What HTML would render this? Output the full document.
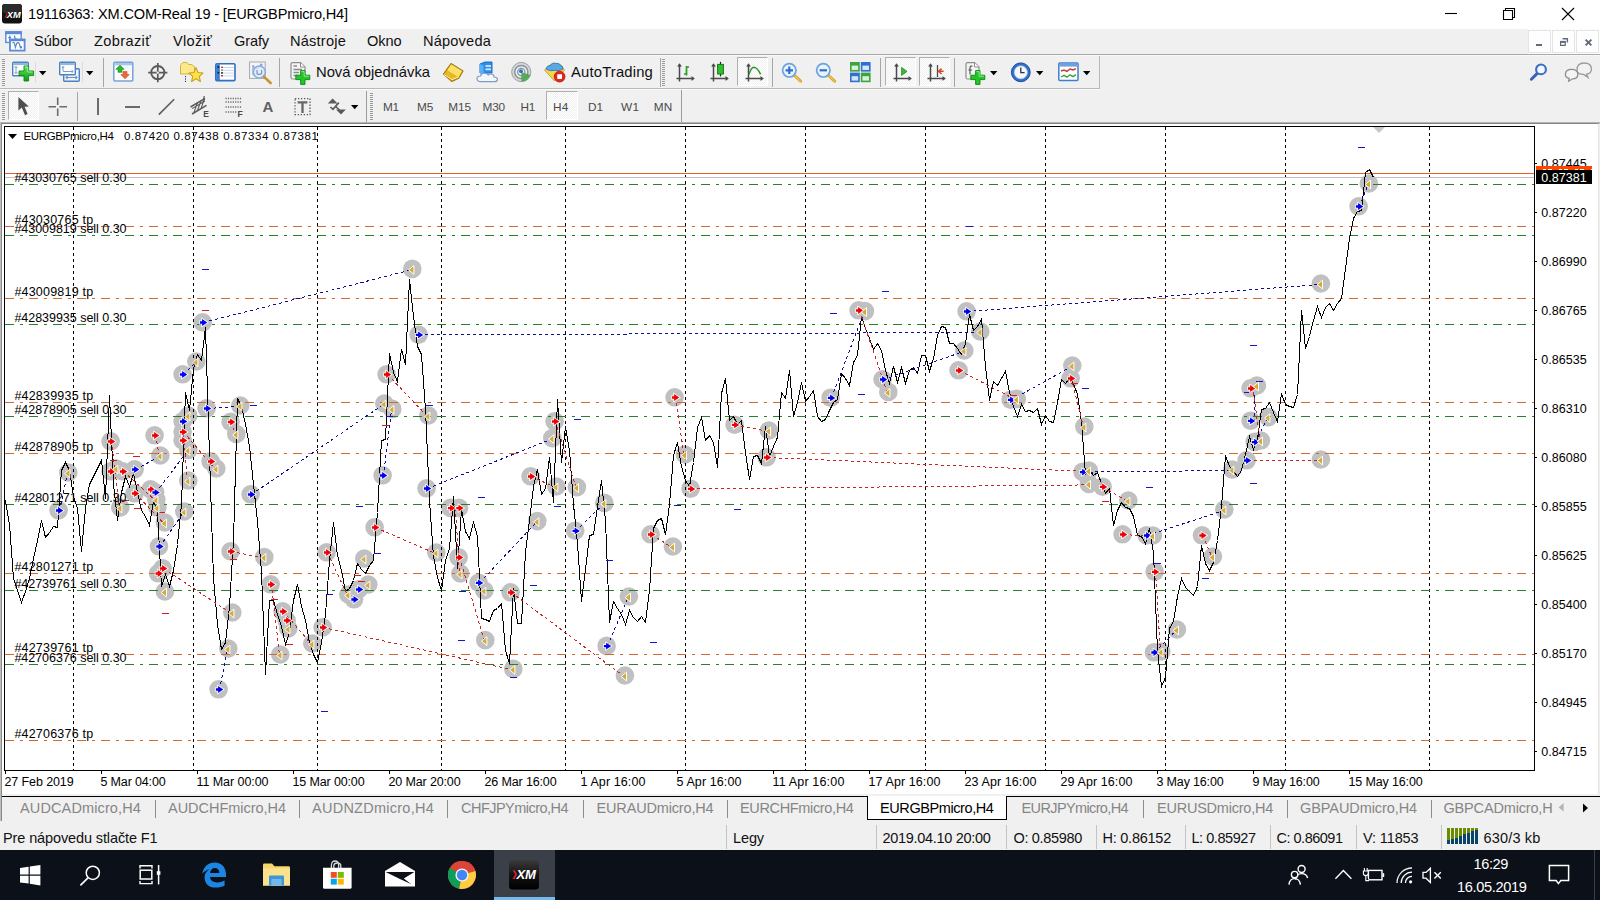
<!DOCTYPE html><html><head><meta charset="utf-8"><title>MT4</title><style>
*{box-sizing:border-box;margin:0;padding:0}
html,body{width:1600px;height:900px;overflow:hidden;background:#f0f0f0;font-family:"Liberation Sans",sans-serif;}
.abs{position:absolute}
.t{position:absolute;white-space:pre;line-height:1;color:#000}
#title{left:0;top:0;width:1600px;height:29px;background:#fff}
#menu{left:0;top:29px;width:1600px;height:25px;background:#f0f0f0}
.mi{font-size:15px;top:34px;color:#111}
.tf{font-size:12px;color:#333;top:101px;letter-spacing:-0.3px}
.cl{font-size:12.5px;color:#000}
.pl{font-size:12.5px;color:#000;left:1541px}
.tl{font-size:12.5px;color:#000;top:775px}
.tab{font-size:14.7px;color:#868686;top:801px}
.st{font-size:14.5px;color:#111;top:831px}
.ssep{position:absolute;top:825px;width:1px;height:24px;background:#c4c4c4}
</style></head><body>
<div class="abs" id="title"></div>
<div class="t" style="left:28px;top:7px;font-size:14.6px;color:#000;letter-spacing:-0.194px;">19116363: XM.COM-Real 19 - [EURGBPmicro,H4]</div>
<svg class="abs" style="left:2px;top:4px" width="21" height="20" viewBox="0 0 21 20"><rect x="0" y="0" width="20" height="19.5" rx="3" fill="#111"/><rect x="0" y="0" width="20" height="9" rx="3" fill="#2b2b2b"/><path d="M2.6 6.6 L4.6 10 L2.4 13.6 L3.8 13.6 L5.8 10.4 Z" fill="#e11"/><text x="4.8" y="13.6" font-family="Liberation Sans" font-weight="bold" font-style="italic" font-size="9.6" fill="#fff" textLength="14" lengthAdjust="spacingAndGlyphs">XM</text></svg>
<svg class="abs" style="left:1430px;top:0" width="170" height="29" viewBox="0 0 170 29" fill="none" stroke="#000" stroke-width="1.1"><path d="M15 13.5 H27"/><path d="M73.5 10.5 H82.5 V19.5 H73.5 Z M75.5 10.5 V8.5 H84.5 V17.5 H82.5"/><path d="M132 8 L144 20 M144 8 L132 20"/></svg>
<div class="abs" id="menu"></div>
<div class="t" style="left:34px;top:34px;font-size:14.6px;color:#111;letter-spacing:0.008px;">Súbor</div>
<div class="t" style="left:94px;top:34px;font-size:14.6px;color:#111;letter-spacing:0.355px;">Zobraziť</div>
<div class="t" style="left:173px;top:34px;font-size:14.6px;color:#111;letter-spacing:0.313px;">Vložiť</div>
<div class="t" style="left:234px;top:34px;font-size:14.6px;color:#111;letter-spacing:-0.139px;">Grafy</div>
<div class="t" style="left:290px;top:34px;font-size:14.6px;color:#111;letter-spacing:0.204px;">Nástroje</div>
<div class="t" style="left:367px;top:34px;font-size:14.6px;color:#111;letter-spacing:-0.099px;">Okno</div>
<div class="t" style="left:423px;top:34px;font-size:14.6px;color:#111;letter-spacing:0.180px;">Nápoveda</div>
<svg class="abs" style="left:4px;top:30px" width="22" height="22" viewBox="0 0 22 22"><rect x="1.8" y="2" width="15.4" height="10.4" fill="#fdfeff" stroke="#5a8ad6" stroke-width="1.4"/><rect x="1.2" y="1.2" width="16.6" height="3" fill="#5a8ad6"/><path d="M4.2 7.6 H7 M5.8 5.4 V9 M10.6 5.6 V7.6 L12.4 9" stroke="#5f86cc" stroke-width="1.2" fill="none"/><rect x="6" y="9.6" width="14.6" height="11" fill="#fdfeff" stroke="#5a8ad6" stroke-width="1.8"/><rect x="5.2" y="8.8" width="16.2" height="2.4" fill="#5a8ad6"/><path d="M8.4 12.6 Q10.2 11.8 10.6 14 L11.4 17.4 L12.6 13.6 Q14 11.6 15.2 13.6 L16.2 16.8" stroke="#5f86cc" stroke-width="1.2" fill="none"/><rect x="15.8" y="16.2" width="2.2" height="2.2" fill="#4f7fd6"/></svg>
<div class="abs" style="left:0;top:54px;width:1600px;height:1px;background:#a9a9a9"></div>
<div class="abs" style="left:0;top:55px;width:1600px;height:1px;background:#f9f9f9"></div>
<div class="abs" style="left:1528px;top:29px;width:72px;height:25px;background:#fdfdfd"></div>
<div class="abs" style="left:1528px;top:30px;width:23px;height:23px;background:#fefefe;border:1px solid #e4e4e6"></div>
<div class="abs" style="left:1552px;top:30px;width:23px;height:23px;background:#fefefe;border:1px solid #e4e4e6"></div>
<div class="abs" style="left:1576px;top:30px;width:23px;height:23px;background:#fefefe;border:1px solid #e4e4e6"></div>
<svg class="abs" style="left:1528px;top:30px" width="72" height="23" viewBox="0 0 72 23" fill="none" stroke="#626a77"><path d="M8 15 H14" stroke-width="2"/><path d="M32.6 12.2 H37.2 V15.4 H32.6 Z" stroke-width="1.2"/><path d="M32 11.8 H37.8" stroke-width="1.8"/><path d="M34.6 8.8 H40 M39.4 8.6 V12.4" stroke-width="1.4"/><path d="M57.6 9.6 L63.4 15.4 M63.4 9.6 L57.6 15.4" stroke-width="1.9"/></svg>
<div class="abs" style="left:0;top:89px;width:1100px;height:1px;background:#fbfbfb"></div>
<svg class="abs" style="left:2px;top:59px" width="3" height="27" viewBox="0 0 3 27" shape-rendering="crispEdges"><rect x="0" y="0" width="3" height="1" fill="#9a9a9a"/><rect x="0" y="2" width="3" height="1" fill="#9a9a9a"/><rect x="0" y="4" width="3" height="1" fill="#9a9a9a"/><rect x="0" y="6" width="3" height="1" fill="#9a9a9a"/><rect x="0" y="8" width="3" height="1" fill="#9a9a9a"/><rect x="0" y="10" width="3" height="1" fill="#9a9a9a"/><rect x="0" y="12" width="3" height="1" fill="#9a9a9a"/><rect x="0" y="14" width="3" height="1" fill="#9a9a9a"/><rect x="0" y="16" width="3" height="1" fill="#9a9a9a"/><rect x="0" y="18" width="3" height="1" fill="#9a9a9a"/><rect x="0" y="20" width="3" height="1" fill="#9a9a9a"/><rect x="0" y="22" width="3" height="1" fill="#9a9a9a"/><rect x="0" y="24" width="3" height="1" fill="#9a9a9a"/><rect x="0" y="26" width="3" height="1" fill="#9a9a9a"/></svg>
<div class="abs" style="left:1099px;top:56px;width:1px;height:33px;background:#b9b9b9"></div>
<div class="abs" style="left:0px;top:88px;width:1100px;height:1px;background:#b9b9b9"></div>
<svg class="abs" style="left:12px;top:61px" width="23" height="22" viewBox="0 0 23 22" ><defs><linearGradient id="gp" x1="0" y1="0" x2="0" y2="1"><stop offset="0" stop-color="#5fe85f"/><stop offset="1" stop-color="#0f9a15"/></linearGradient></defs>
<rect x="0.7" y="1.2" width="15.6" height="13.6" rx="1" fill="#fdfdfe" stroke="#4b82bf" stroke-width="1.4"/>
<rect x="1.4" y="1.9" width="14.2" height="2.2" fill="#8fb6e0"/>
<path d="M4 5.5 V12.5 M2.6 7 L4 5.3 L5.4 7 M2.6 11 L4 12.7 L5.4 11" stroke="#8fa3b8" stroke-width="1" fill="none"/>
<path d="M12 5 h4.6 v5 h5 v4.6 h-5 v5.4 h-4.6 v-5.4 h-5 v-4.6 h5 z" fill="url(#gp)" stroke="#0b8a12" stroke-width="0.9"/>
<path d="M12.8 6 h3 v5 h4.8" stroke="#b9ffb9" stroke-width="0.9" fill="none" opacity="0.8"/></svg>
<div class="abs" style="left:35px;top:62px;width:1px;height:21px;background:#dcdcdc"></div>
<svg class="abs" style="left:39px;top:71px" width="8" height="5" viewBox="0 0 8 5" ><path d="M0 0 H7.4 L3.7 4.2 Z" fill="#000"/></svg>
<svg class="abs" style="left:59px;top:61px" width="22" height="22" viewBox="0 0 22 22" ><rect x="4.7" y="7.7" width="15.6" height="12.6" rx="1" fill="#eef4fb" stroke="#4b82bf" stroke-width="1.4"/>
<path d="M7 16.5 H18 M8.5 15 L7 16.5 L8.5 18 M16.5 15 L18 16.5 L16.5 18" stroke="#6f93bd" stroke-width="1.1" fill="none"/>
<rect x="0.7" y="1.2" width="15.6" height="12.6" rx="1" fill="#fdfdfe" stroke="#4b82bf" stroke-width="1.4"/>
<rect x="1.4" y="1.9" width="14.2" height="2.2" fill="#8fb6e0"/>
<path d="M4 5.5 V10 M2.8 7 L4 5.4 L5.2 7 M4 10.5 H14 M12.6 9.2 L14.2 10.5 L12.6 11.8" stroke="#7d9cc0" stroke-width="1" fill="none"/></svg>
<div class="abs" style="left:82px;top:62px;width:1px;height:21px;background:#dcdcdc"></div>
<svg class="abs" style="left:86px;top:71px" width="8" height="5" viewBox="0 0 8 5" ><path d="M0 0 H7.4 L3.7 4.2 Z" fill="#000"/></svg>
<div class="abs" style="left:103px;top:58px;width:1px;height:29px;background:#a6a6a6"></div>
<svg class="abs" style="left:113px;top:61px" width="21" height="22" viewBox="0 0 21 22" ><rect x="0.8" y="1.3" width="19" height="18.6" rx="1" fill="#fbfcfe" stroke="#78a3d6" stroke-width="1.5"/>
<rect x="1.5" y="2" width="17.6" height="2.4" fill="#a9c8ec"/>
<path d="M10 7 H18 M10 10 H18 M10 13 H18 M10 16 H18" stroke="#e4e9f0" stroke-width="0.8"/>
<path d="M7 4.2 L11.2 8.3 H9 V11.3 H5 V8.3 H2.8 Z" fill="#2eb52e" stroke="#178a17" stroke-width="0.6"/>
<path d="M12 17.7 L7.8 13.6 H10 V10.6 H14 V13.6 H16.2 Z" fill="#f0683a" stroke="#c9441a" stroke-width="0.6"/></svg>
<svg class="abs" style="left:147px;top:62px" width="22" height="22" viewBox="0 0 22 22" ><circle cx="10.8" cy="10.6" r="6.6" fill="none" stroke="#5a5a5a" stroke-width="1.9"/>
<path d="M10.8 1 V20.2 M1.2 10.6 H20.4" stroke="#5a5a5a" stroke-width="1.7"/>
<circle cx="10.8" cy="10.6" r="1.2" fill="#f0f0f0"/></svg>
<svg class="abs" style="left:179px;top:61px" width="25" height="22" viewBox="0 0 25 22" ><path d="M1.5 13 V4.5 Q1.5 3.5 2.5 3 L4 1.5 H8 L9.5 3.5 H13 L15.5 6 V13 Z" fill="#fbe88a" stroke="#d2b23a" stroke-width="1"/>
<path d="M6.5 15 V21" stroke="#333" stroke-width="1" stroke-dasharray="1.2 1.2"/>
<path d="M17 6.6 L19.1 11.5 L24 12 L20.3 15.3 L21.4 20.6 L17 17.8 L12.6 20.6 L13.7 15.3 L10 12 L14.9 11.5 Z" fill="#fbe24a" stroke="#c9a21a" stroke-width="1.1" stroke-linejoin="round"/></svg>
<svg class="abs" style="left:215px;top:62px" width="21" height="20" viewBox="0 0 21 20" ><rect x="0.8" y="1.8" width="19.2" height="16.8" rx="1.2" fill="#fff" stroke="#2f71c4" stroke-width="1.6"/>
<rect x="1.2" y="2.2" width="3.6" height="16" fill="#3b7bd0"/>
<path d="M6 5.5 H19 M6 8.3 H19 M6 11.1 H19 M6 13.9 H19" stroke="#c9d6ee" stroke-width="1"/>
<rect x="2.6" y="4.3" width="1.6" height="1.6" fill="#111"/><rect x="2.6" y="9.9" width="1.6" height="1.6" fill="#111"/>
<rect x="6" y="4.6" width="2" height="1.4" fill="#d33"/><rect x="6" y="7.4" width="2" height="1.4" fill="#5a5"/><rect x="6" y="10.2" width="2" height="1.4" fill="#224"/><rect x="6" y="13" width="2" height="1.4" fill="#d33"/></svg>
<svg class="abs" style="left:249px;top:61px" width="24" height="24" viewBox="0 0 24 24" ><rect x="0.6" y="1" width="15.6" height="16.4" fill="#f6f6f6" stroke="#a8a8a8" stroke-width="1"/>
<path d="M4 4 V14 M4 5 L8 8 L12 3.5 M11 3.2 H13 V5" stroke="#6d90c9" stroke-width="1" fill="none"/>
<circle cx="10.3" cy="11" r="6" fill="#dbe9fb" fill-opacity="0.85" stroke="#86aee0" stroke-width="1.6"/>
<path d="M8 9 V12.5 Q10.3 14.5 12.6 12.5 V9" stroke="#7f98b8" stroke-width="1.2" fill="none"/>
<path d="M14.8 15.6 L21.6 22" stroke="#c9952a" stroke-width="2.6" stroke-linecap="round"/></svg>
<div class="abs" style="left:279px;top:58px;width:1px;height:29px;background:#a6a6a6"></div>
<svg class="abs" style="left:290px;top:61px" width="22" height="24" viewBox="0 0 22 24" ><path d="M1 3.2 Q1 1.6 2.6 1.6 H10.5 L15 6 V16.5 Q15 18 13.4 18 H2.6 Q1 18 1 16.5 Z" fill="#f4f4f4" stroke="#8e8e8e" stroke-width="1.2"/>
<path d="M10.5 1.8 V6 H14.8" fill="#fff" stroke="#8e8e8e" stroke-width="1"/>
<path d="M3.5 5 H7 M3.5 8.5 H12 M3.5 11.5 H9 M3.5 14.5 H8" stroke="#8a8a8a" stroke-width="1.4"/>
<path d="M10.6 9.6 h4.4 v4.6 h4.8 v4.4 h-4.8 v4.8 h-4.4 v-4.8 h-4.8 v-4.4 h4.8 z" fill="#25c42b" stroke="#0b8a12" stroke-width="0.9"/>
<path d="M11.4 10.6 h2.8 v4.6 h4.6" stroke="#b0ffb0" stroke-width="0.9" fill="none" opacity="0.8"/></svg>
<div class="t" style="left:316px;top:65px;font-size:14.8px;color:#111;letter-spacing:-0.025px;">Nová objednávka</div>
<svg class="abs" style="left:442px;top:62px" width="23" height="21" viewBox="0 0 23 21" ><path d="M1.5 12 L9 1.6 L21 9 L17 16 L10 19.5 Z" fill="#e9b722" stroke="#a97a10" stroke-width="1.2" stroke-linejoin="round"/>
<path d="M9.2 2.4 L20 9 L16.4 15 L5.4 8.2 Z" fill="#fbe169"/>
<path d="M2 12.5 L10 17.6 L17 14.6" stroke="#fff1a8" stroke-width="1" fill="none"/></svg>
<svg class="abs" style="left:476px;top:61px" width="23" height="22" viewBox="0 0 23 22" ><path d="M4 3 L9 1 H16 V12 H4 Z" fill="#2e8de6" stroke="#1b6fc4" stroke-width="1"/>
<path d="M4 3 L7.5 4.5 V12 H4 Z" fill="#53b3ff"/>
<rect x="9.5" y="4" width="5.5" height="2" fill="#bfe0ff"/><rect x="9.5" y="7.3" width="5.5" height="2" fill="#bfe0ff"/>
<path d="M4 20.6 Q0.8 20.4 1 17.4 Q1.4 14.8 4.6 15 Q5.6 11.6 9.2 12.2 Q11.2 12.4 12.2 14 Q14.6 11.8 17 13.8 Q18.2 14.8 18 16 Q21.6 16 21.4 18.6 Q21.2 20.6 18.6 20.6 Z" fill="#f3f6fb" stroke="#7e9cc6" stroke-width="1.2"/></svg>
<svg class="abs" style="left:510px;top:61px" width="23" height="22" viewBox="0 0 23 22" ><circle cx="11.3" cy="11" r="9.6" fill="#d4d7da" stroke="#9aa0a6" stroke-width="1"/>
<circle cx="11.3" cy="11" r="6.6" fill="#eceeef" stroke="#8c9399" stroke-width="1.5"/>
<circle cx="11.3" cy="11" r="3.6" fill="#f7f7f7" stroke="#8c9399" stroke-width="1.3"/>
<path d="M11.3 11 V20.6 A9.6 9.6 0 0 0 20.4 14 Z" fill="#4ca64c" opacity="0.9"/>
<circle cx="11" cy="10.3" r="2" fill="#2f74d0"/></svg>
<svg class="abs" style="left:543px;top:61px" width="23" height="23" viewBox="0 0 23 23" ><path d="M1.5 9 L8 3 H17 L21.5 9 L11.5 20 Z" fill="#f6d54a" stroke="#caa326" stroke-width="1"/>
<path d="M3 8 Q4 4 7.6 4.8 Q9 1.2 12.6 2.4 Q15.8 1.4 17 4.6 Q20.4 4.6 20 8 Q16 10.4 11.4 9.4 Q6.6 10.6 3 8 Z" fill="#5aa9e6" stroke="#2c7cc4" stroke-width="0.9"/>
<circle cx="16.6" cy="15.6" r="5.4" fill="#e8261c" stroke="#a8140c" stroke-width="0.8"/>
<rect x="14.2" y="13.3" width="4.8" height="4.6" rx="0.6" fill="#fff"/></svg>
<div class="t" style="left:571px;top:65px;font-size:14.8px;color:#111;letter-spacing:0.175px;">AutoTrading</div>
<div class="abs" style="left:660px;top:58px;width:1px;height:29px;background:#a6a6a6"></div>
<svg class="abs" style="left:662px;top:59px" width="3" height="27" viewBox="0 0 3 27" shape-rendering="crispEdges"><rect x="0" y="0" width="3" height="1" fill="#9a9a9a"/><rect x="0" y="2" width="3" height="1" fill="#9a9a9a"/><rect x="0" y="4" width="3" height="1" fill="#9a9a9a"/><rect x="0" y="6" width="3" height="1" fill="#9a9a9a"/><rect x="0" y="8" width="3" height="1" fill="#9a9a9a"/><rect x="0" y="10" width="3" height="1" fill="#9a9a9a"/><rect x="0" y="12" width="3" height="1" fill="#9a9a9a"/><rect x="0" y="14" width="3" height="1" fill="#9a9a9a"/><rect x="0" y="16" width="3" height="1" fill="#9a9a9a"/><rect x="0" y="18" width="3" height="1" fill="#9a9a9a"/><rect x="0" y="20" width="3" height="1" fill="#9a9a9a"/><rect x="0" y="22" width="3" height="1" fill="#9a9a9a"/><rect x="0" y="24" width="3" height="1" fill="#9a9a9a"/><rect x="0" y="26" width="3" height="1" fill="#9a9a9a"/></svg>
<svg class="abs" style="left:675px;top:62px" width="20" height="21" viewBox="0 0 20 21" ><path d="M4.5 2.5 V19.5 M1.5 16.5 H18.5" stroke="#4a4a4a" stroke-width="1.5" fill="none"/>
<path d="M2.8 4.6 L4.5 2.2 L6.2 4.6 M16.4 14.8 L18.8 16.5 L16.4 18.2" stroke="#4a4a4a" stroke-width="1.2" fill="none"/>
<path d="M11.5 4 V13.5 M11.5 5 H14 M9 12 H11.5" stroke="#22a022" stroke-width="1.7" fill="none"/></svg>
<svg class="abs" style="left:709px;top:61px" width="20" height="22" viewBox="0 0 20 22" ><path d="M4.5 3.5 V20.5 M1.5 17.5 H18.5" stroke="#4a4a4a" stroke-width="1.5" fill="none"/>
<path d="M2.8 5.6 L4.5 3.2 L6.2 5.6 M16.4 15.8 L18.8 17.5 L16.4 19.2" stroke="#4a4a4a" stroke-width="1.2" fill="none"/>
<path d="M11.5 0.8 V15.4" stroke="#222" stroke-width="1.2"/>
<rect x="8.6" y="3.4" width="5.8" height="9.6" fill="#2fbf2f" stroke="#137a13" stroke-width="1"/></svg>
<div class="abs" style="left:737px;top:57px;width:31px;height:29px;background:#f9f9f9;border-left:1px solid #b0b0b0;border-top:1px solid #b0b0b0;border-right:1px solid #fff;border-bottom:1px solid #fff;background-image:repeating-conic-gradient(#ffffff 0 25%,#f0f0f0 0 50%);background-size:2px 2px"></div>
<svg class="abs" style="left:744px;top:62px" width="20" height="21" viewBox="0 0 20 21" ><path d="M4.5 2.5 V19.5 M1.5 16.5 H18.5" stroke="#4a4a4a" stroke-width="1.5" fill="none"/>
<path d="M2.8 4.6 L4.5 2.2 L6.2 4.6 M16.4 14.8 L18.8 16.5 L16.4 18.2" stroke="#4a4a4a" stroke-width="1.2" fill="none"/>
<path d="M5 12.5 Q7 5.4 10 5.2 Q13.5 5.6 16.6 12.4" stroke="#2a9a2a" stroke-width="1.5" fill="none"/></svg>
<div class="abs" style="left:772px;top:58px;width:1px;height:29px;background:#a6a6a6"></div>
<svg class="abs" style="left:781px;top:62px" width="22" height="21" viewBox="0 0 22 21" ><path d="M13 13 L19.6 19.2" stroke="#d9a92a" stroke-width="3" stroke-linecap="round"/>
<path d="M13 13 L19.6 19.2" stroke="#f3d66a" stroke-width="1" stroke-linecap="round"/>
<circle cx="8.3" cy="8.3" r="6.7" fill="#e9f3ff" stroke="#6fa2dc" stroke-width="1.7"/><path d="M8.3 4.6 V12 M4.6 8.3 H12" stroke="#2a72c8" stroke-width="2.2"/></svg>
<svg class="abs" style="left:815px;top:62px" width="22" height="21" viewBox="0 0 22 21" ><path d="M13 13 L19.6 19.2" stroke="#d9a92a" stroke-width="3" stroke-linecap="round"/>
<path d="M13 13 L19.6 19.2" stroke="#f3d66a" stroke-width="1" stroke-linecap="round"/>
<circle cx="8.3" cy="8.3" r="6.7" fill="#e9f3ff" stroke="#6fa2dc" stroke-width="1.7"/><path d="M4.6 8.3 H12" stroke="#2a72c8" stroke-width="2.2"/></svg>
<svg class="abs" style="left:850px;top:62px" width="21" height="21" viewBox="0 0 21 21" ><rect x="0" y="0" width="9.8" height="9.6" fill="#3fa33f"/><rect x="10.8" y="0" width="9.8" height="9.6" fill="#2f6fd0"/>
<rect x="0" y="10.6" width="9.8" height="9.6" fill="#2f6fd0"/><rect x="10.8" y="10.6" width="9.8" height="9.6" fill="#3fa33f"/>
<rect x="1.6" y="3.6" width="6.6" height="4.4" fill="#d8f0d8"/><rect x="12.4" y="3.6" width="6.6" height="4.4" fill="#d6e4fa"/>
<rect x="1.6" y="14.2" width="6.6" height="4.4" fill="#d6e4fa"/><rect x="12.4" y="14.2" width="6.6" height="4.4" fill="#d8f0d8"/></svg>
<div class="abs" style="left:880px;top:58px;width:1px;height:29px;background:#a6a6a6"></div>
<div class="abs" style="left:885px;top:57px;width:31px;height:29px;background:#f9f9f9;border-left:1px solid #b0b0b0;border-top:1px solid #b0b0b0;border-right:1px solid #fff;border-bottom:1px solid #fff;background-image:repeating-conic-gradient(#ffffff 0 25%,#f0f0f0 0 50%);background-size:2px 2px"></div>
<svg class="abs" style="left:892px;top:62px" width="20" height="21" viewBox="0 0 20 21" ><path d="M4.5 2.5 V19.5 M1.5 16.5 H18.5" stroke="#4a4a4a" stroke-width="1.5" fill="none"/>
<path d="M2.8 4.6 L4.5 2.2 L6.2 4.6 M16.4 14.8 L18.8 16.5 L16.4 18.2" stroke="#4a4a4a" stroke-width="1.2" fill="none"/>
<path d="M9.6 5.4 L15 9.4 L9.6 13.4 Z" fill="#3cb83c" stroke="#1e8a1e" stroke-width="0.8"/></svg>
<div class="abs" style="left:919px;top:57px;width:31px;height:29px;background:#f9f9f9;border-left:1px solid #b0b0b0;border-top:1px solid #b0b0b0;border-right:1px solid #fff;border-bottom:1px solid #fff;background-image:repeating-conic-gradient(#ffffff 0 25%,#f0f0f0 0 50%);background-size:2px 2px"></div>
<svg class="abs" style="left:926px;top:62px" width="20" height="21" viewBox="0 0 20 21" ><path d="M4.5 2.5 V19.5 M1.5 16.5 H18.5" stroke="#4a4a4a" stroke-width="1.5" fill="none"/>
<path d="M2.8 4.6 L4.5 2.2 L6.2 4.6 M16.4 14.8 L18.8 16.5 L16.4 18.2" stroke="#4a4a4a" stroke-width="1.2" fill="none"/>
<path d="M11.5 3 V15" stroke="#4a4a4a" stroke-width="1.3"/>
<path d="M17.6 9.3 H13.2 M15.6 6.6 L12.6 9.3 L15.6 12" stroke="#d8461e" stroke-width="1.5" fill="none"/></svg>
<div class="abs" style="left:954px;top:58px;width:1px;height:29px;background:#a6a6a6"></div>
<svg class="abs" style="left:965px;top:61px" width="22" height="24" viewBox="0 0 22 24" ><path d="M1 3.2 Q1 1.6 2.6 1.6 H9.5 L14 6 V16.5 Q14 18 12.4 18 H2.6 Q1 18 1 16.5 Z" fill="#f4f4f4" stroke="#8e8e8e" stroke-width="1.2"/>
<path d="M9.5 1.8 V6 H13.8" fill="#fff" stroke="#8e8e8e" stroke-width="1"/>
<path d="M7.4 5.2 Q5 4.6 5 7 V13.6 M3.4 9 H7" stroke="#555" stroke-width="1.2" fill="none"/>
<path d="M10.6 9.6 h4.4 v4.6 h4.8 v4.4 h-4.8 v4.8 h-4.4 v-4.8 h-4.8 v-4.4 h4.8 z" fill="#25c42b" stroke="#0b8a12" stroke-width="0.9"/>
<path d="M11.4 10.6 h2.8 v4.6 h4.6" stroke="#b0ffb0" stroke-width="0.9" fill="none" opacity="0.8"/></svg>
<svg class="abs" style="left:990px;top:71px" width="8" height="5" viewBox="0 0 8 5" ><path d="M0 0 H7.4 L3.7 4.2 Z" fill="#000"/></svg>
<svg class="abs" style="left:1010px;top:62px" width="22" height="21" viewBox="0 0 22 21" ><circle cx="10.8" cy="10.3" r="9.4" fill="#2f6fc8" stroke="#1d4f9c" stroke-width="1"/>
<circle cx="10.8" cy="10.3" r="6.6" fill="#f4f8fd" stroke="#9dbce6" stroke-width="0.8"/>
<path d="M10.8 5.6 V10.6 H14.6" stroke="#333" stroke-width="1.3" fill="none"/></svg>
<svg class="abs" style="left:1036px;top:71px" width="8" height="5" viewBox="0 0 8 5" ><path d="M0 0 H7.4 L3.7 4.2 Z" fill="#000"/></svg>
<svg class="abs" style="left:1058px;top:62px" width="21" height="20" viewBox="0 0 21 20" ><rect x="0.8" y="1" width="19.2" height="17.6" rx="1" fill="#fff" stroke="#3f7fd0" stroke-width="1.5"/>
<rect x="1.4" y="1.6" width="18" height="3" fill="#6fa0e0"/>
<path d="M3 9 L6 8 L9 9.4 L12 7 L15 8 L18 6.6" stroke="#c83a2a" stroke-width="1.4" fill="none"/>
<path d="M3 15 L6 13.4 L9 15.2 L12 12.8 L15 14.6 L18 12.6" stroke="#3aa43a" stroke-width="1.4" fill="none"/></svg>
<svg class="abs" style="left:1083px;top:71px" width="8" height="5" viewBox="0 0 8 5" ><path d="M0 0 H7.4 L3.7 4.2 Z" fill="#000"/></svg>
<svg class="abs" style="left:1529px;top:62px" width="20" height="20" viewBox="0 0 20 20" ><path d="M2.4 17.2 L9 10.6" stroke="#3a62b8" stroke-width="3" stroke-linecap="round"/>
<circle cx="12" cy="7.4" r="4.9" fill="#f4f8ff" stroke="#3a6cc8" stroke-width="2.1"/></svg>
<svg class="abs" style="left:1564px;top:61px" width="29" height="21" viewBox="0 0 29 21" ><path d="M13 9 Q13 2 20 2 Q27.4 2 27.4 8 Q27.4 12.6 22.6 13.2 L24 16.4 L19.6 13.4 Q13 13.4 13 9 Z" fill="#f2f2f2" stroke="#9a9a9a" stroke-width="1.3"/>
<path d="M1.4 13.6 Q1.4 8.4 7.6 8.4 Q13.8 8.4 13.8 13.4 Q13.8 17.6 8.6 17.8 L4.6 20.2 L5.2 17.4 Q1.4 16.8 1.4 13.6 Z" fill="#f4f4f4" stroke="#8e8e8e" stroke-width="1.3"/></svg>
<svg class="abs" style="left:2px;top:93px" width="3" height="28" viewBox="0 0 3 28" shape-rendering="crispEdges"><rect x="0" y="0" width="3" height="1" fill="#9a9a9a"/><rect x="0" y="2" width="3" height="1" fill="#9a9a9a"/><rect x="0" y="4" width="3" height="1" fill="#9a9a9a"/><rect x="0" y="6" width="3" height="1" fill="#9a9a9a"/><rect x="0" y="8" width="3" height="1" fill="#9a9a9a"/><rect x="0" y="10" width="3" height="1" fill="#9a9a9a"/><rect x="0" y="12" width="3" height="1" fill="#9a9a9a"/><rect x="0" y="14" width="3" height="1" fill="#9a9a9a"/><rect x="0" y="16" width="3" height="1" fill="#9a9a9a"/><rect x="0" y="18" width="3" height="1" fill="#9a9a9a"/><rect x="0" y="20" width="3" height="1" fill="#9a9a9a"/><rect x="0" y="22" width="3" height="1" fill="#9a9a9a"/><rect x="0" y="24" width="3" height="1" fill="#9a9a9a"/><rect x="0" y="26" width="3" height="1" fill="#9a9a9a"/></svg>
<div class="abs" style="left:8px;top:91px;width:31px;height:29px;background:#f9f9f9;border-left:1px solid #b0b0b0;border-top:1px solid #b0b0b0;border-right:1px solid #fff;border-bottom:1px solid #fff;background-image:repeating-conic-gradient(#ffffff 0 25%,#f0f0f0 0 50%);background-size:2px 2px"></div>
<svg class="abs" style="left:17px;top:96px" width="13" height="21" viewBox="0 0 13 21" ><path d="M1.4 1 L1.4 14.6 L4.8 11.6 L8 19.2 L10.6 18 L7.6 10.8 L11.8 10.4 Z" fill="#4e4e4e"/></svg>
<svg class="abs" style="left:47px;top:96px" width="22" height="22" viewBox="0 0 22 22" ><path d="M10.7 1.5 V9 M10.7 12.4 V20 M1.5 10.7 H9 M12.4 10.7 H20" stroke="#6c6c6c" stroke-width="1.6"/></svg>
<div class="abs" style="left:77px;top:92px;width:1px;height:29px;background:#a6a6a6"></div>
<div class="abs" style="left:97px;top:98px;width:2px;height:17px;background:#6a6a6a"></div>
<div class="abs" style="left:125px;top:106px;width:15px;height:2px;background:#6a6a6a"></div>
<svg class="abs" style="left:157px;top:97px" width="19" height="19" viewBox="0 0 19 19" ><path d="M1.8 17.6 L17.2 2.2" stroke="#5e5e5e" stroke-width="1.6"/></svg>
<svg class="abs" style="left:189px;top:95px" width="21" height="23" viewBox="0 0 21 23" ><path d="M1.5 12 L16 3.4 M3 19 L17.5 10.4" stroke="#5a5a5a" stroke-width="1.5"/>
<path d="M5 17.4 L8.4 7.8 M8.6 15.2 L12 5.8 M12.2 13 L15.6 3.4 M3 13.6 L16 6 " stroke="#5a5a5a" stroke-width="1.1"/>
<path d="M15.2 1 L14.2 7.4" stroke="#5a5a5a" stroke-width="1.2"/>
<text x="14.2" y="22" font-family="Liberation Sans" font-weight="bold" font-size="8.4" fill="#4a4a4a">E</text></svg>
<svg class="abs" style="left:225px;top:96px" width="20" height="22" viewBox="0 0 20 22" ><path d="M0.5 2.5 H17 M0.5 6 H17 M0.5 11 H17 M0.5 16 H12" stroke="#6a6a6a" stroke-width="1.5" stroke-dasharray="1.2 1.2"/>
<text x="12.6" y="21" font-family="Liberation Sans" font-weight="bold" font-size="8.6" fill="#4a4a4a">F</text></svg>
<div class="t" style="left:262.6px;top:99px;font-size:15px;font-weight:bold;color:#5e5e5e">A</div>
<svg class="abs" style="left:294px;top:97px" width="17" height="19" viewBox="0 0 17 19" ><rect x="1" y="1.6" width="15" height="16" fill="none" stroke="#5a5a5a" stroke-width="1.3" stroke-dasharray="1.3 1.7"/>
<path d="M3.6 5.4 H13.4 M8.5 5.4 V16" stroke="#666" stroke-width="2.3" fill="none"/></svg>
<svg class="abs" style="left:327px;top:97px" width="20" height="19" viewBox="0 0 20 19" ><path d="M5.6 1.6 L10.6 6.6 H0.8 Z" fill="#5a5a5a"/><path d="M14 17.6 L9 12.6 H18.8 Z" fill="#5a5a5a"/>
<path d="M3.4 10 L6 12.4 L11.8 5.6" stroke="#5a5a5a" stroke-width="1.7" fill="none"/><path d="M8.8 9.6 L12.6 13" stroke="#5a5a5a" stroke-width="1.5"/></svg>
<svg class="abs" style="left:351px;top:105px" width="8" height="5" viewBox="0 0 8 5" ><path d="M0 0 H7.4 L3.7 4.2 Z" fill="#000"/></svg>
<div class="abs" style="left:366px;top:91px;width:1px;height:31px;background:#9c9c9c"></div>
<svg class="abs" style="left:370px;top:93px" width="3" height="28" viewBox="0 0 3 28" shape-rendering="crispEdges"><rect x="0" y="0" width="3" height="1" fill="#9a9a9a"/><rect x="0" y="2" width="3" height="1" fill="#9a9a9a"/><rect x="0" y="4" width="3" height="1" fill="#9a9a9a"/><rect x="0" y="6" width="3" height="1" fill="#9a9a9a"/><rect x="0" y="8" width="3" height="1" fill="#9a9a9a"/><rect x="0" y="10" width="3" height="1" fill="#9a9a9a"/><rect x="0" y="12" width="3" height="1" fill="#9a9a9a"/><rect x="0" y="14" width="3" height="1" fill="#9a9a9a"/><rect x="0" y="16" width="3" height="1" fill="#9a9a9a"/><rect x="0" y="18" width="3" height="1" fill="#9a9a9a"/><rect x="0" y="20" width="3" height="1" fill="#9a9a9a"/><rect x="0" y="22" width="3" height="1" fill="#9a9a9a"/><rect x="0" y="24" width="3" height="1" fill="#9a9a9a"/><rect x="0" y="26" width="3" height="1" fill="#9a9a9a"/></svg>
<div class="abs" style="left:546px;top:91px;width:32px;height:29px;background:#f9f9f9;border-left:1px solid #b0b0b0;border-top:1px solid #b0b0b0;border-right:1px solid #fff;border-bottom:1px solid #fff;background-image:repeating-conic-gradient(#ffffff 0 25%,#f0f0f0 0 50%);background-size:2px 2px"></div>
<div class="t" style="left:383px;top:102px;font-size:11.8px;color:#4a4a4a;letter-spacing:-0.346px;">M1</div>
<div class="t" style="left:417px;top:102px;font-size:11.8px;color:#4a4a4a;letter-spacing:-0.196px;">M5</div>
<div class="t" style="left:448.3px;top:102px;font-size:11.8px;color:#4a4a4a;letter-spacing:-0.085px;">M15</div>
<div class="t" style="left:482.5px;top:102px;font-size:11.8px;color:#4a4a4a;letter-spacing:-0.152px;">M30</div>
<div class="t" style="left:520.5px;top:102px;font-size:11.8px;color:#4a4a4a;letter-spacing:-0.292px;">H1</div>
<div class="t" style="left:553px;top:102px;font-size:11.8px;color:#4a4a4a;letter-spacing:0.308px;">H4</div>
<div class="t" style="left:588px;top:102px;font-size:11.8px;color:#4a4a4a;letter-spacing:-0.042px;">D1</div>
<div class="t" style="left:621px;top:102px;font-size:11.8px;color:#4a4a4a;letter-spacing:0.400px;">W1</div>
<div class="t" style="left:653.7px;top:102px;font-size:11.8px;color:#4a4a4a;letter-spacing:0.224px;">MN</div>
<div class="abs" style="left:681px;top:90px;width:1px;height:32px;background:#9c9c9c"></div>
<div class="abs" style="left:0;top:122px;width:1600px;height:2px;background:#b4b4b4"></div>
<div class="abs" style="left:0;top:123px;width:1599px;height:672px;background:#fff;border-top:1px solid #858585;border-right:1px solid #e4e4e4"></div>
<div class="abs" style="left:0;top:122px;width:1px;height:699px;background:#bdbdbd"></div>
<div class="abs" style="left:1px;top:123px;width:1px;height:698px;background:#8a8a8a"></div>
<svg class="abs" style="left:0;top:0" width="1600" height="900" viewBox="0 0 1600 900" shape-rendering="crispEdges">
<g fill="#c0c0c0" shape-rendering="auto">
<circle cx="68.3" cy="472.5" r="9.3"/>
<circle cx="58.6" cy="510.3" r="9.3"/>
<circle cx="110.6" cy="441.3" r="9.3"/>
<circle cx="110.6" cy="471.3" r="9.3"/>
<circle cx="116.3" cy="468.5" r="9.3"/>
<circle cx="122.6" cy="471.3" r="9.3"/>
<circle cx="134.6" cy="469.3" r="9.3"/>
<circle cx="154.6" cy="435.3" r="9.3"/>
<circle cx="160.3" cy="455.5" r="9.3"/>
<circle cx="134.6" cy="493.3" r="9.3"/>
<circle cx="150.6" cy="489.3" r="9.3"/>
<circle cx="155.1" cy="492.3" r="9.3"/>
<circle cx="156.3" cy="499.5" r="9.3"/>
<circle cx="157.3" cy="507.5" r="9.3"/>
<circle cx="120.3" cy="507.5" r="9.3"/>
<circle cx="164.8" cy="522.5" r="9.3"/>
<circle cx="159.0" cy="546.3" r="9.3"/>
<circle cx="184.3" cy="511.5" r="9.3"/>
<circle cx="188.3" cy="480.5" r="9.3"/>
<circle cx="188.3" cy="415.5" r="9.3"/>
<circle cx="182.6" cy="421.3" r="9.3"/>
<circle cx="182.6" cy="431.8" r="9.3"/>
<circle cx="182.6" cy="440.3" r="9.3"/>
<circle cx="188.3" cy="450.0" r="9.3"/>
<circle cx="206.6" cy="408.3" r="9.3"/>
<circle cx="240.3" cy="405.5" r="9.3"/>
<circle cx="230.6" cy="421.8" r="9.3"/>
<circle cx="236.3" cy="434.0" r="9.3"/>
<circle cx="210.6" cy="461.3" r="9.3"/>
<circle cx="216.3" cy="468.5" r="9.3"/>
<circle cx="250.6" cy="494.3" r="9.3"/>
<circle cx="230.6" cy="551.3" r="9.3"/>
<circle cx="264.3" cy="557.0" r="9.3"/>
<circle cx="162.6" cy="568.3" r="9.3"/>
<circle cx="158.2" cy="573.3" r="9.3"/>
<circle cx="164.9" cy="591.5" r="9.3"/>
<circle cx="232.3" cy="612.5" r="9.3"/>
<circle cx="228.3" cy="648.5" r="9.3"/>
<circle cx="218.6" cy="689.3" r="9.3"/>
<circle cx="270.6" cy="584.3" r="9.3"/>
<circle cx="282.6" cy="611.3" r="9.3"/>
<circle cx="286.6" cy="620.3" r="9.3"/>
<circle cx="288.3" cy="628.5" r="9.3"/>
<circle cx="280.3" cy="654.5" r="9.3"/>
<circle cx="312.3" cy="643.5" r="9.3"/>
<circle cx="202.6" cy="322.3" r="9.3"/>
<circle cx="196.3" cy="361.5" r="9.3"/>
<circle cx="182.6" cy="374.3" r="9.3"/>
<circle cx="412.3" cy="268.9" r="9.3"/>
<circle cx="418.6" cy="334.7" r="9.3"/>
<circle cx="386.6" cy="374.3" r="9.3"/>
<circle cx="384.3" cy="403.5" r="9.3"/>
<circle cx="392.3" cy="408.9" r="9.3"/>
<circle cx="428.3" cy="415.5" r="9.3"/>
<circle cx="382.6" cy="475.3" r="9.3"/>
<circle cx="426.6" cy="488.3" r="9.3"/>
<circle cx="374.6" cy="527.3" r="9.3"/>
<circle cx="326.6" cy="552.3" r="9.3"/>
<circle cx="364.3" cy="558.5" r="9.3"/>
<circle cx="436.3" cy="552.5" r="9.3"/>
<circle cx="450.6" cy="507.9" r="9.3"/>
<circle cx="459.0" cy="507.9" r="9.3"/>
<circle cx="458.6" cy="557.3" r="9.3"/>
<circle cx="460.3" cy="573.5" r="9.3"/>
<circle cx="537.3" cy="521.1" r="9.3"/>
<circle cx="530.6" cy="476.3" r="9.3"/>
<circle cx="556.3" cy="486.5" r="9.3"/>
<circle cx="576.9" cy="487.1" r="9.3"/>
<circle cx="554.6" cy="421.3" r="9.3"/>
<circle cx="552.3" cy="438.1" r="9.3"/>
<circle cx="575.2" cy="530.7" r="9.3"/>
<circle cx="604.3" cy="502.9" r="9.3"/>
<circle cx="348.3" cy="594.5" r="9.3"/>
<circle cx="354.0" cy="599.3" r="9.3"/>
<circle cx="358.6" cy="589.3" r="9.3"/>
<circle cx="368.3" cy="584.5" r="9.3"/>
<circle cx="322.6" cy="627.3" r="9.3"/>
<circle cx="478.6" cy="582.7" r="9.3"/>
<circle cx="484.3" cy="590.5" r="9.3"/>
<circle cx="510.6" cy="592.3" r="9.3"/>
<circle cx="485.3" cy="640.1" r="9.3"/>
<circle cx="513.3" cy="668.9" r="9.3"/>
<circle cx="606.6" cy="645.9" r="9.3"/>
<circle cx="624.9" cy="675.5" r="9.3"/>
<circle cx="628.9" cy="596.5" r="9.3"/>
<circle cx="650.6" cy="534.3" r="9.3"/>
<circle cx="672.9" cy="546.5" r="9.3"/>
<circle cx="690.6" cy="488.7" r="9.3"/>
<circle cx="674.6" cy="397.3" r="9.3"/>
<circle cx="684.9" cy="454.5" r="9.3"/>
<circle cx="734.6" cy="424.7" r="9.3"/>
<circle cx="768.9" cy="430.5" r="9.3"/>
<circle cx="766.6" cy="457.3" r="9.3"/>
<circle cx="830.6" cy="397.7" r="9.3"/>
<circle cx="882.6" cy="379.3" r="9.3"/>
<circle cx="888.3" cy="391.9" r="9.3"/>
<circle cx="858.6" cy="310.3" r="9.3"/>
<circle cx="864.9" cy="311.1" r="9.3"/>
<circle cx="966.6" cy="311.3" r="9.3"/>
<circle cx="980.3" cy="331.5" r="9.3"/>
<circle cx="964.3" cy="350.5" r="9.3"/>
<circle cx="958.6" cy="370.3" r="9.3"/>
<circle cx="1010.6" cy="399.7" r="9.3"/>
<circle cx="1016.8" cy="398.9" r="9.3"/>
<circle cx="1072.3" cy="365.5" r="9.3"/>
<circle cx="1070.6" cy="378.3" r="9.3"/>
<circle cx="1084.3" cy="426.5" r="9.3"/>
<circle cx="1082.6" cy="471.9" r="9.3"/>
<circle cx="1088.9" cy="470.5" r="9.3"/>
<circle cx="1088.9" cy="483.9" r="9.3"/>
<circle cx="1102.6" cy="486.7" r="9.3"/>
<circle cx="1128.3" cy="500.5" r="9.3"/>
<circle cx="1122.6" cy="534.3" r="9.3"/>
<circle cx="1146.6" cy="535.3" r="9.3"/>
<circle cx="1152.9" cy="535.5" r="9.3"/>
<circle cx="1154.6" cy="571.7" r="9.3"/>
<circle cx="1202.0" cy="535.3" r="9.3"/>
<circle cx="1212.9" cy="556.5" r="9.3"/>
<circle cx="1224.3" cy="509.5" r="9.3"/>
<circle cx="1232.3" cy="469.5" r="9.3"/>
<circle cx="1246.6" cy="460.3" r="9.3"/>
<circle cx="1320.9" cy="459.5" r="9.3"/>
<circle cx="1254.6" cy="441.9" r="9.3"/>
<circle cx="1260.9" cy="440.5" r="9.3"/>
<circle cx="1154.0" cy="652.3" r="9.3"/>
<circle cx="1161.3" cy="651.5" r="9.3"/>
<circle cx="1176.9" cy="629.5" r="9.3"/>
<circle cx="1250.6" cy="388.3" r="9.3"/>
<circle cx="1256.9" cy="385.5" r="9.3"/>
<circle cx="1250.6" cy="420.7" r="9.3"/>
<circle cx="1268.3" cy="417.1" r="9.3"/>
<circle cx="1368.9" cy="183.5" r="9.3"/>
<circle cx="1358.6" cy="206.3" r="9.3"/>
<circle cx="1320.9" cy="283.5" r="9.3"/>
</g>
<path d="M73.5 127 V770" stroke="#000" stroke-width="1" stroke-dasharray="3 3" fill="none"/>
<path d="M193.5 127 V770" stroke="#000" stroke-width="1" stroke-dasharray="3 3" fill="none"/>
<path d="M317.5 127 V770" stroke="#000" stroke-width="1" stroke-dasharray="3 3" fill="none"/>
<path d="M441.5 127 V770" stroke="#000" stroke-width="1" stroke-dasharray="3 3" fill="none"/>
<path d="M565.5 127 V770" stroke="#000" stroke-width="1" stroke-dasharray="3 3" fill="none"/>
<path d="M685.5 127 V770" stroke="#000" stroke-width="1" stroke-dasharray="3 3" fill="none"/>
<path d="M805.5 127 V770" stroke="#000" stroke-width="1" stroke-dasharray="3 3" fill="none"/>
<path d="M925.5 127 V770" stroke="#000" stroke-width="1" stroke-dasharray="3 3" fill="none"/>
<path d="M1045.5 127 V770" stroke="#000" stroke-width="1" stroke-dasharray="3 3" fill="none"/>
<path d="M1165.5 127 V770" stroke="#000" stroke-width="1" stroke-dasharray="3 3" fill="none"/>
<path d="M1285.5 127 V770" stroke="#000" stroke-width="1" stroke-dasharray="3 3" fill="none"/>
<path d="M1429.5 127 V770" stroke="#000" stroke-width="1" stroke-dasharray="3 3" fill="none"/>
<path d="M5 184.5 H1534" stroke="#2a7f2a" stroke-width="1" stroke-dasharray="9 6 3 6" fill="none"/>
<path d="M5 235.5 H1534" stroke="#2a7f2a" stroke-width="1" stroke-dasharray="9 6 3 6" fill="none"/>
<path d="M5 324.5 H1534" stroke="#2a7f2a" stroke-width="1" stroke-dasharray="9 6 3 6" fill="none"/>
<path d="M5 416.5 H1534" stroke="#2a7f2a" stroke-width="1" stroke-dasharray="9 6 3 6" fill="none"/>
<path d="M5 504.5 H1534" stroke="#2a7f2a" stroke-width="1" stroke-dasharray="9 6 3 6" fill="none"/>
<path d="M5 590.5 H1534" stroke="#2a7f2a" stroke-width="1" stroke-dasharray="9 6 3 6" fill="none"/>
<path d="M5 664.5 H1534" stroke="#2a7f2a" stroke-width="1" stroke-dasharray="9 6 3 6" fill="none"/>
<path d="M5 226.5 H1534" stroke="#cf6a35" stroke-width="1" stroke-dasharray="9 6 3 6" fill="none"/>
<path d="M5 298.5 H1534" stroke="#cf6a35" stroke-width="1" stroke-dasharray="9 6 3 6" fill="none"/>
<path d="M5 402.5 H1534" stroke="#cf6a35" stroke-width="1" stroke-dasharray="9 6 3 6" fill="none"/>
<path d="M5 453.5 H1534" stroke="#cf6a35" stroke-width="1" stroke-dasharray="9 6 3 6" fill="none"/>
<path d="M5 573.5 H1534" stroke="#cf6a35" stroke-width="1" stroke-dasharray="9 6 3 6" fill="none"/>
<path d="M5 654.5 H1534" stroke="#cf6a35" stroke-width="1" stroke-dasharray="9 6 3 6" fill="none"/>
<path d="M5 740.5 H1534" stroke="#cf6a35" stroke-width="1" stroke-dasharray="9 6 3 6" fill="none"/>
<path d="M5 173.5 H1534" stroke="#e0602a" stroke-width="1" fill="none"/>
<path d="M5 177.5 H1534" stroke="#c0c0c0" stroke-width="1" fill="none"/>
<polyline points="5.5,500.5 9.5,524.5 13.5,578.5 17.5,590.5 21.5,602.5 25.5,591.5 29.5,578.5 33.5,558.5 37.5,540.5 41.5,520.5 45.5,537.5 49.5,532.5 53.5,526.5 57.5,527.5 61.5,470.5 65.5,462.5 69.5,470.5 73.5,496.5 77.5,508.5 81.5,551.5 85.5,508.5 89.5,484.5 93.5,476.5 97.5,468.5 101.5,460.5 105.5,498.5 109.5,395.5 113.5,484.5 117.5,520.5 121.5,492.5 125.5,476.5 129.5,486.5 133.5,473.5 137.5,492.5 141.5,510.5 145.5,516.5 149.5,525.5 153.5,500.5 157.5,512.5 161.5,586.5 165.5,574.5 169.5,586.5 173.5,570.5 177.5,544.5 181.5,504.5 185.5,392.5 189.5,410.5 193.5,368.5 197.5,354.5 201.5,360.5 205.5,327.5 209.5,455.5 213.5,578.5 217.5,624.5 221.5,649.5 225.5,642.5 229.5,606.5 233.5,540.5 237.5,398.5 241.5,406.5 245.5,424.5 249.5,446.5 253.5,484.5 257.5,521.5 261.5,572.5 265.5,674.5 269.5,600.5 273.5,600.5 277.5,614.5 281.5,626.5 285.5,644.5 289.5,632.5 293.5,600.5 297.5,584.5 301.5,606.5 305.5,620.5 309.5,642.5 313.5,654.5 317.5,662.5 321.5,642.5 325.5,614.5 329.5,560.5 333.5,522.5 337.5,555.5 341.5,570.5 345.5,591.5 349.5,588.5 353.5,580.5 357.5,563.5 361.5,569.5 365.5,573.5 369.5,565.5 373.5,560.5 377.5,512.5 381.5,440.5 385.5,439.5 389.5,353.5 393.5,372.5 397.5,381.5 401.5,349.5 405.5,364.5 409.5,279.5 413.5,316.5 417.5,346.5 421.5,354.5 425.5,409.5 429.5,500.5 433.5,556.5 437.5,577.5 441.5,590.5 445.5,560.5 449.5,548.5 453.5,496.5 457.5,568.5 461.5,509.5 465.5,531.5 469.5,538.5 473.5,522.5 477.5,536.5 481.5,618.5 485.5,619.5 489.5,621.5 493.5,610.5 497.5,608.5 501.5,603.5 505.5,650.5 509.5,663.5 513.5,588.5 517.5,623.5 521.5,623.5 525.5,552.5 529.5,520.5 533.5,486.5 537.5,469.5 541.5,494.5 545.5,488.5 549.5,457.5 553.5,502.5 557.5,399.5 561.5,462.5 565.5,426.5 569.5,450.5 573.5,504.5 577.5,543.5 581.5,601.5 585.5,569.5 589.5,535.5 593.5,534.5 597.5,506.5 601.5,480.5 605.5,520.5 609.5,622.5 613.5,601.5 617.5,608.5 621.5,614.5 625.5,624.5 629.5,610.5 633.5,617.5 637.5,621.5 641.5,616.5 645.5,622.5 649.5,590.5 653.5,528.5 657.5,520.5 661.5,518.5 665.5,534.5 669.5,504.5 673.5,455.5 677.5,442.5 681.5,466.5 685.5,480.5 689.5,486.5 693.5,462.5 697.5,427.5 701.5,417.5 705.5,440.5 709.5,435.5 713.5,442.5 717.5,467.5 721.5,393.5 725.5,378.5 729.5,420.5 733.5,416.5 737.5,424.5 741.5,420.5 745.5,452.5 749.5,479.5 753.5,456.5 757.5,455.5 761.5,463.5 765.5,426.5 769.5,456.5 773.5,446.5 777.5,437.5 781.5,392.5 785.5,398.5 789.5,370.5 793.5,416.5 797.5,402.5 801.5,382.5 805.5,401.5 809.5,396.5 813.5,390.5 817.5,416.5 821.5,421.5 825.5,419.5 829.5,410.5 833.5,402.5 837.5,399.5 841.5,373.5 845.5,378.5 849.5,385.5 853.5,362.5 857.5,355.5 861.5,316.5 865.5,328.5 869.5,338.5 873.5,349.5 877.5,343.5 881.5,350.5 885.5,370.5 889.5,383.5 893.5,366.5 897.5,382.5 901.5,367.5 905.5,383.5 909.5,370.5 913.5,367.5 917.5,373.5 921.5,355.5 925.5,355.5 929.5,371.5 933.5,358.5 937.5,335.5 941.5,326.5 945.5,327.5 949.5,343.5 953.5,343.5 957.5,348.5 961.5,354.5 965.5,343.5 969.5,314.5 973.5,330.5 977.5,326.5 981.5,319.5 985.5,366.5 989.5,400.5 993.5,381.5 997.5,385.5 1001.5,378.5 1005.5,371.5 1009.5,392.5 1013.5,406.5 1017.5,416.5 1021.5,404.5 1025.5,411.5 1029.5,410.5 1033.5,412.5 1037.5,408.5 1041.5,424.5 1045.5,415.5 1049.5,421.5 1053.5,422.5 1057.5,402.5 1061.5,379.5 1065.5,383.5 1069.5,378.5 1073.5,383.5 1077.5,394.5 1081.5,422.5 1085.5,474.5 1089.5,470.5 1093.5,475.5 1097.5,472.5 1101.5,483.5 1105.5,493.5 1109.5,488.5 1113.5,525.5 1117.5,510.5 1121.5,502.5 1125.5,507.5 1129.5,508.5 1133.5,516.5 1137.5,535.5 1141.5,536.5 1145.5,543.5 1149.5,528.5 1153.5,552.5 1157.5,650.5 1161.5,686.5 1165.5,677.5 1169.5,628.5 1173.5,621.5 1177.5,596.5 1181.5,578.5 1185.5,587.5 1189.5,591.5 1193.5,595.5 1197.5,586.5 1201.5,545.5 1205.5,563.5 1209.5,570.5 1213.5,562.5 1217.5,540.5 1221.5,506.5 1225.5,455.5 1229.5,466.5 1233.5,471.5 1237.5,476.5 1241.5,470.5 1245.5,454.5 1249.5,436.5 1253.5,449.5 1257.5,438.5 1261.5,409.5 1265.5,408.5 1269.5,402.5 1273.5,412.5 1277.5,421.5 1281.5,393.5 1285.5,404.5 1289.5,406.5 1293.5,407.5 1297.5,394.5 1301.5,310.5 1305.5,348.5 1309.5,336.5 1313.5,320.5 1317.5,306.5 1321.5,317.5 1325.5,307.5 1329.5,303.5 1333.5,310.5 1337.5,303.5 1341.5,298.5 1345.5,268.5 1349.5,238.5 1353.5,218.5 1357.5,211.5 1361.5,210.5 1365.5,172.5 1369.5,169.5 1373.5,177.5" fill="none" stroke="#000" stroke-width="1" stroke-linejoin="miter" shape-rendering="crispEdges"/>
<path d="M59.5 510.5 L67.5 473.5" stroke="#0c0c96" stroke-width="1" stroke-dasharray="3 3" fill="none" shape-rendering="crispEdges"/>
<path d="M135.5 469.5 L159.5 456.5" stroke="#0c0c96" stroke-width="1" stroke-dasharray="3 3" fill="none" shape-rendering="crispEdges"/>
<path d="M155.5 435.5 L159.5 456.5" stroke="#c82424" stroke-width="1" stroke-dasharray="3 3" fill="none" shape-rendering="crispEdges"/>
<path d="M156.0 492.5 L187.5 451.0" stroke="#0c0c96" stroke-width="1" stroke-dasharray="3 3" fill="none" shape-rendering="crispEdges"/>
<path d="M159.9 546.5 L183.5 512.5" stroke="#0c0c96" stroke-width="1" stroke-dasharray="3 3" fill="none" shape-rendering="crispEdges"/>
<path d="M183.5 374.5 L195.5 362.5" stroke="#0c0c96" stroke-width="1" stroke-dasharray="3 3" fill="none" shape-rendering="crispEdges"/>
<path d="M203.5 322.5 L411.5 269.9" stroke="#0c0c96" stroke-width="1" stroke-dasharray="3 3" fill="none" shape-rendering="crispEdges"/>
<path d="M207.5 408.5 L239.5 406.5" stroke="#0c0c96" stroke-width="1" stroke-dasharray="3 3" fill="none" shape-rendering="crispEdges"/>
<path d="M183.5 436.5 L187.5 481.5" stroke="#c82424" stroke-width="1" stroke-dasharray="3 3" fill="none" shape-rendering="crispEdges"/>
<path d="M183.5 432.0 L215.5 469.5" stroke="#c82424" stroke-width="1" stroke-dasharray="3 3" fill="none" shape-rendering="crispEdges"/>
<path d="M231.5 422.0 L235.5 435.0" stroke="#c82424" stroke-width="1" stroke-dasharray="3 3" fill="none" shape-rendering="crispEdges"/>
<path d="M211.5 461.5 L215.5 469.5" stroke="#c82424" stroke-width="1" stroke-dasharray="3 3" fill="none" shape-rendering="crispEdges"/>
<path d="M251.5 494.5 L383.5 404.5" stroke="#0c0c96" stroke-width="1" stroke-dasharray="3 3" fill="none" shape-rendering="crispEdges"/>
<path d="M231.5 551.5 L263.5 558.0" stroke="#c82424" stroke-width="1" stroke-dasharray="3 3" fill="none" shape-rendering="crispEdges"/>
<path d="M163.5 568.5 L231.5 613.5" stroke="#c82424" stroke-width="1" stroke-dasharray="3 3" fill="none" shape-rendering="crispEdges"/>
<path d="M219.5 689.5 L227.5 649.5" stroke="#0c0c96" stroke-width="1" stroke-dasharray="3 3" fill="none" shape-rendering="crispEdges"/>
<path d="M271.5 584.5 L279.5 655.5" stroke="#c82424" stroke-width="1" stroke-dasharray="3 3" fill="none" shape-rendering="crispEdges"/>
<path d="M283.5 611.5 L311.5 644.5" stroke="#c82424" stroke-width="1" stroke-dasharray="3 3" fill="none" shape-rendering="crispEdges"/>
<path d="M111.5 441.5 L119.5 508.5" stroke="#c82424" stroke-width="1" stroke-dasharray="3 3" fill="none" shape-rendering="crispEdges"/>
<path d="M135.5 493.5 L164.0 523.5" stroke="#c82424" stroke-width="1" stroke-dasharray="3 3" fill="none" shape-rendering="crispEdges"/>
<path d="M123.5 471.5 L155.5 500.5" stroke="#c82424" stroke-width="1" stroke-dasharray="3 3" fill="none" shape-rendering="crispEdges"/>
<path d="M419.5 334.9 L979.5 332.5" stroke="#0c0c96" stroke-width="1" stroke-dasharray="3 3" fill="none" shape-rendering="crispEdges"/>
<path d="M387.5 374.5 L427.5 416.5" stroke="#c82424" stroke-width="1" stroke-dasharray="3 3" fill="none" shape-rendering="crispEdges"/>
<path d="M383.5 475.5 L391.5 409.9" stroke="#0c0c96" stroke-width="1" stroke-dasharray="3 3" fill="none" shape-rendering="crispEdges"/>
<path d="M427.5 488.5 L551.5 439.1" stroke="#0c0c96" stroke-width="1" stroke-dasharray="3 3" fill="none" shape-rendering="crispEdges"/>
<path d="M375.5 527.5 L435.5 553.5" stroke="#c82424" stroke-width="1" stroke-dasharray="3 3" fill="none" shape-rendering="crispEdges"/>
<path d="M327.5 552.5 L347.5 595.5" stroke="#c82424" stroke-width="1" stroke-dasharray="3 3" fill="none" shape-rendering="crispEdges"/>
<path d="M323.5 627.5 L512.5 669.9" stroke="#c82424" stroke-width="1" stroke-dasharray="3 3" fill="none" shape-rendering="crispEdges"/>
<path d="M455.5 508.1 L459.5 574.5" stroke="#c82424" stroke-width="1" stroke-dasharray="3 3" fill="none" shape-rendering="crispEdges"/>
<path d="M459.5 557.5 L484.5 641.1" stroke="#c82424" stroke-width="1" stroke-dasharray="3 3" fill="none" shape-rendering="crispEdges"/>
<path d="M511.5 592.5 L624.1 676.5" stroke="#c82424" stroke-width="1" stroke-dasharray="3 3" fill="none" shape-rendering="crispEdges"/>
<path d="M531.5 476.5 L555.5 487.5" stroke="#c82424" stroke-width="1" stroke-dasharray="3 3" fill="none" shape-rendering="crispEdges"/>
<path d="M555.5 421.5 L576.1 488.1" stroke="#c82424" stroke-width="1" stroke-dasharray="3 3" fill="none" shape-rendering="crispEdges"/>
<path d="M479.5 582.9 L536.5 522.1" stroke="#0c0c96" stroke-width="1" stroke-dasharray="3 3" fill="none" shape-rendering="crispEdges"/>
<path d="M576.1 530.9 L603.5 503.9" stroke="#0c0c96" stroke-width="1" stroke-dasharray="3 3" fill="none" shape-rendering="crispEdges"/>
<path d="M607.5 646.1 L628.1 597.5" stroke="#0c0c96" stroke-width="1" stroke-dasharray="3 3" fill="none" shape-rendering="crispEdges"/>
<path d="M651.5 534.5 L672.1 547.5" stroke="#c82424" stroke-width="1" stroke-dasharray="3 3" fill="none" shape-rendering="crispEdges"/>
<path d="M675.5 397.5 L684.1 455.5" stroke="#c82424" stroke-width="1" stroke-dasharray="3 3" fill="none" shape-rendering="crispEdges"/>
<path d="M735.5 424.9 L768.1 431.5" stroke="#c82424" stroke-width="1" stroke-dasharray="3 3" fill="none" shape-rendering="crispEdges"/>
<path d="M767.5 457.5 L1088.1 471.5" stroke="#c82424" stroke-width="1" stroke-dasharray="3 3" fill="none" shape-rendering="crispEdges"/>
<path d="M691.5 488.9 L1088.1 484.9" stroke="#c82424" stroke-width="1" stroke-dasharray="3 3" fill="none" shape-rendering="crispEdges"/>
<path d="M831.5 397.9 L864.1 312.1" stroke="#0c0c96" stroke-width="1" stroke-dasharray="3 3" fill="none" shape-rendering="crispEdges"/>
<path d="M859.5 310.5 L887.5 392.9" stroke="#c82424" stroke-width="1" stroke-dasharray="3 3" fill="none" shape-rendering="crispEdges"/>
<path d="M883.5 379.5 L963.5 351.5" stroke="#0c0c96" stroke-width="1" stroke-dasharray="3 3" fill="none" shape-rendering="crispEdges"/>
<path d="M967.5 311.5 L1320.1 284.5" stroke="#0c0c96" stroke-width="1" stroke-dasharray="3 3" fill="none" shape-rendering="crispEdges"/>
<path d="M959.5 370.5 L1016.0 399.9" stroke="#c82424" stroke-width="1" stroke-dasharray="3 3" fill="none" shape-rendering="crispEdges"/>
<path d="M1011.5 399.9 L1071.5 366.5" stroke="#0c0c96" stroke-width="1" stroke-dasharray="3 3" fill="none" shape-rendering="crispEdges"/>
<path d="M1071.5 378.5 L1083.5 427.5" stroke="#c82424" stroke-width="1" stroke-dasharray="3 3" fill="none" shape-rendering="crispEdges"/>
<path d="M1083.5 472.1 L1231.5 470.5" stroke="#0c0c96" stroke-width="1" stroke-dasharray="3 3" fill="none" shape-rendering="crispEdges"/>
<path d="M1103.5 486.9 L1127.5 501.5" stroke="#c82424" stroke-width="1" stroke-dasharray="3 3" fill="none" shape-rendering="crispEdges"/>
<path d="M1123.5 534.5 L1152.1 536.5" stroke="#c82424" stroke-width="1" stroke-dasharray="3 3" fill="none" shape-rendering="crispEdges"/>
<path d="M1147.5 535.5 L1223.5 510.5" stroke="#0c0c96" stroke-width="1" stroke-dasharray="3 3" fill="none" shape-rendering="crispEdges"/>
<path d="M1155.5 571.9 L1160.5 652.5" stroke="#c82424" stroke-width="1" stroke-dasharray="3 3" fill="none" shape-rendering="crispEdges"/>
<path d="M1154.9 652.5 L1176.1 630.5" stroke="#0c0c96" stroke-width="1" stroke-dasharray="3 3" fill="none" shape-rendering="crispEdges"/>
<path d="M1202.9 535.5 L1212.1 557.5" stroke="#c82424" stroke-width="1" stroke-dasharray="3 3" fill="none" shape-rendering="crispEdges"/>
<path d="M1247.5 460.5 L1320.1 460.5" stroke="#c82424" stroke-width="1" stroke-dasharray="3 3" fill="none" shape-rendering="crispEdges"/>
<path d="M1254.1 394.5 L1254.1 420.5" stroke="#0c0c96" stroke-width="1" stroke-dasharray="3 3" fill="none" shape-rendering="crispEdges"/>
<path d="M1253.5 392.5 L1260.1 441.5" stroke="#c82424" stroke-width="1" stroke-dasharray="3 3" fill="none" shape-rendering="crispEdges"/>
<path d="M1255.5 442.1 L1267.5 418.1" stroke="#0c0c96" stroke-width="1" stroke-dasharray="3 3" fill="none" shape-rendering="crispEdges"/>
<path d="M1359.5 206.5 L1368.1 184.5" stroke="#0c0c96" stroke-width="1" stroke-dasharray="3 3" fill="none" shape-rendering="crispEdges"/>
<path d="M359.5 589.5 L367.5 585.5" stroke="#0c0c96" stroke-width="1" stroke-dasharray="3 3" fill="none" shape-rendering="crispEdges"/>
<path d="M202.2 269.5 h7" stroke="#1414c8" stroke-width="1.2" fill="none" shape-rendering="crispEdges"/>
<path d="M202.2 310.5 h7" stroke="#cc2020" stroke-width="1.2" fill="none" shape-rendering="crispEdges"/>
<path d="M249.6 405.5 h7" stroke="#1414c8" stroke-width="1.2" fill="none" shape-rendering="crispEdges"/>
<path d="M425.6 405.5 h7" stroke="#1414c8" stroke-width="1.2" fill="none" shape-rendering="crispEdges"/>
<path d="M382.2 425.5 h7" stroke="#cc2020" stroke-width="1.2" fill="none" shape-rendering="crispEdges"/>
<path d="M386.2 416.5 h7" stroke="#1414c8" stroke-width="1.2" fill="none" shape-rendering="crispEdges"/>
<path d="M356.2 506.5 h7" stroke="#1414c8" stroke-width="1.2" fill="none" shape-rendering="crispEdges"/>
<path d="M374.2 553.5 h7" stroke="#1414c8" stroke-width="1.2" fill="none" shape-rendering="crispEdges"/>
<path d="M478.2 497.5 h7" stroke="#1414c8" stroke-width="1.2" fill="none" shape-rendering="crispEdges"/>
<path d="M574.2 419.5 h7" stroke="#1414c8" stroke-width="1.2" fill="none" shape-rendering="crispEdges"/>
<path d="M554.2 506.5 h7" stroke="#1414c8" stroke-width="1.2" fill="none" shape-rendering="crispEdges"/>
<path d="M606.2 560.5 h7" stroke="#1414c8" stroke-width="1.2" fill="none" shape-rendering="crispEdges"/>
<path d="M326.2 594.5 h7" stroke="#1414c8" stroke-width="1.2" fill="none" shape-rendering="crispEdges"/>
<path d="M354.2 575.5 h7" stroke="#cc2020" stroke-width="1.2" fill="none" shape-rendering="crispEdges"/>
<path d="M358.2 581.5 h7" stroke="#cc2020" stroke-width="1.2" fill="none" shape-rendering="crispEdges"/>
<path d="M458.6 591.5 h7" stroke="#1414c8" stroke-width="1.2" fill="none" shape-rendering="crispEdges"/>
<path d="M530.2 585.5 h7" stroke="#1414c8" stroke-width="1.2" fill="none" shape-rendering="crispEdges"/>
<path d="M458.2 640.5 h7" stroke="#1414c8" stroke-width="1.2" fill="none" shape-rendering="crispEdges"/>
<path d="M510.2 677.5 h7" stroke="#1414c8" stroke-width="1.2" fill="none" shape-rendering="crispEdges"/>
<path d="M650.2 642.5 h7" stroke="#1414c8" stroke-width="1.2" fill="none" shape-rendering="crispEdges"/>
<path d="M674.2 505.5 h7" stroke="#1414c8" stroke-width="1.2" fill="none" shape-rendering="crispEdges"/>
<path d="M734.2 509.5 h7" stroke="#1414c8" stroke-width="1.2" fill="none" shape-rendering="crispEdges"/>
<path d="M858.2 394.5 h7" stroke="#1414c8" stroke-width="1.2" fill="none" shape-rendering="crispEdges"/>
<path d="M882.2 291.5 h7" stroke="#1414c8" stroke-width="1.2" fill="none" shape-rendering="crispEdges"/>
<path d="M1010.2 395.5 h7" stroke="#cc2020" stroke-width="1.2" fill="none" shape-rendering="crispEdges"/>
<path d="M1070.6 383.5 h7" stroke="#cc2020" stroke-width="1.2" fill="none" shape-rendering="crispEdges"/>
<path d="M1082.2 388.5 h7" stroke="#1414c8" stroke-width="1.2" fill="none" shape-rendering="crispEdges"/>
<path d="M1102.2 501.5 h7" stroke="#cc2020" stroke-width="1.2" fill="none" shape-rendering="crispEdges"/>
<path d="M1146.2 487.5 h7" stroke="#1414c8" stroke-width="1.2" fill="none" shape-rendering="crispEdges"/>
<path d="M1154.2 563.5 h7" stroke="#1414c8" stroke-width="1.2" fill="none" shape-rendering="crispEdges"/>
<path d="M1202.2 578.5 h7" stroke="#1414c8" stroke-width="1.2" fill="none" shape-rendering="crispEdges"/>
<path d="M1250.2 483.5 h7" stroke="#1414c8" stroke-width="1.2" fill="none" shape-rendering="crispEdges"/>
<path d="M1250.2 345.5 h7" stroke="#1414c8" stroke-width="1.2" fill="none" shape-rendering="crispEdges"/>
<path d="M1256.2 381.5 h7" stroke="#1414c8" stroke-width="1.2" fill="none" shape-rendering="crispEdges"/>
<path d="M1244.2 392.5 h7" stroke="#1414c8" stroke-width="1.2" fill="none" shape-rendering="crispEdges"/>
<path d="M1358.2 147.5 h7" stroke="#1414c8" stroke-width="1.2" fill="none" shape-rendering="crispEdges"/>
<path d="M162.2 613.5 h7" stroke="#cc2020" stroke-width="1.2" fill="none" shape-rendering="crispEdges"/>
<path d="M229.6 559.5 h7" stroke="#cc2020" stroke-width="1.2" fill="none" shape-rendering="crispEdges"/>
<path d="M270.6 599.5 h7" stroke="#cc2020" stroke-width="1.2" fill="none" shape-rendering="crispEdges"/>
<path d="M285.6 644.5 h7" stroke="#cc2020" stroke-width="1.2" fill="none" shape-rendering="crispEdges"/>
<path d="M321.4 711.5 h7" stroke="#1414c8" stroke-width="1.2" fill="none" shape-rendering="crispEdges"/>
<path d="M132.6 456.5 h7" stroke="#cc2020" stroke-width="1.2" fill="none" shape-rendering="crispEdges"/>
<path d="M110.2 460.5 h7" stroke="#cc2020" stroke-width="1.2" fill="none" shape-rendering="crispEdges"/>
<path d="M121.6 500.5 h7" stroke="#cc2020" stroke-width="1.2" fill="none" shape-rendering="crispEdges"/>
<path d="M134.2 508.5 h7" stroke="#cc2020" stroke-width="1.2" fill="none" shape-rendering="crispEdges"/>
<path d="M158.2 512.5 h7" stroke="#cc2020" stroke-width="1.2" fill="none" shape-rendering="crispEdges"/>
<path d="M965.6 226.5 h7" stroke="#1414c8" stroke-width="1.2" fill="none" shape-rendering="crispEdges"/>
<path d="M829.6 313.5 h7" stroke="#1414c8" stroke-width="1.2" fill="none" shape-rendering="crispEdges"/>
<g shape-rendering="auto">
<path d="M69.9 469.1 L69.9 477.9 L64.6 473.5 Z" fill="#d6aa34" stroke="#fff" stroke-width="1" stroke-linejoin="miter"/>
<path d="M55.9 509.3 h2.2 v-2.2 l5.2 3.4 l-5.2 3.4 v-2.2 h-2.2 Z" fill="#0000f0" stroke="#fff" stroke-width="1.6" paint-order="stroke" stroke-linejoin="miter"/>
<path d="M107.9 440.3 h2.2 v-2.2 l5.2 3.4 l-5.2 3.4 v-2.2 h-2.2 Z" fill="#f00000" stroke="#fff" stroke-width="1.6" paint-order="stroke" stroke-linejoin="miter"/>
<path d="M107.9 470.3 h2.2 v-2.2 l5.2 3.4 l-5.2 3.4 v-2.2 h-2.2 Z" fill="#f00000" stroke="#fff" stroke-width="1.6" paint-order="stroke" stroke-linejoin="miter"/>
<path d="M117.9 465.1 L117.9 473.9 L112.6 469.5 Z" fill="#d6aa34" stroke="#fff" stroke-width="1" stroke-linejoin="miter"/>
<path d="M119.9 470.3 h2.2 v-2.2 l5.2 3.4 l-5.2 3.4 v-2.2 h-2.2 Z" fill="#f00000" stroke="#fff" stroke-width="1.6" paint-order="stroke" stroke-linejoin="miter"/>
<path d="M131.9 468.3 h2.2 v-2.2 l5.2 3.4 l-5.2 3.4 v-2.2 h-2.2 Z" fill="#0000f0" stroke="#fff" stroke-width="1.6" paint-order="stroke" stroke-linejoin="miter"/>
<path d="M151.9 434.3 h2.2 v-2.2 l5.2 3.4 l-5.2 3.4 v-2.2 h-2.2 Z" fill="#f00000" stroke="#fff" stroke-width="1.6" paint-order="stroke" stroke-linejoin="miter"/>
<path d="M161.9 452.1 L161.9 460.9 L156.6 456.5 Z" fill="#d6aa34" stroke="#fff" stroke-width="1" stroke-linejoin="miter"/>
<path d="M131.9 492.3 h2.2 v-2.2 l5.2 3.4 l-5.2 3.4 v-2.2 h-2.2 Z" fill="#f00000" stroke="#fff" stroke-width="1.6" paint-order="stroke" stroke-linejoin="miter"/>
<path d="M147.9 488.3 h2.2 v-2.2 l5.2 3.4 l-5.2 3.4 v-2.2 h-2.2 Z" fill="#f00000" stroke="#fff" stroke-width="1.6" paint-order="stroke" stroke-linejoin="miter"/>
<path d="M152.4 491.3 h2.2 v-2.2 l5.2 3.4 l-5.2 3.4 v-2.2 h-2.2 Z" fill="#0000f0" stroke="#fff" stroke-width="1.6" paint-order="stroke" stroke-linejoin="miter"/>
<path d="M157.9 496.1 L157.9 504.9 L152.6 500.5 Z" fill="#d6aa34" stroke="#fff" stroke-width="1" stroke-linejoin="miter"/>
<path d="M158.9 504.1 L158.9 512.9 L153.6 508.5 Z" fill="#d6aa34" stroke="#fff" stroke-width="1" stroke-linejoin="miter"/>
<path d="M121.9 504.1 L121.9 512.9 L116.6 508.5 Z" fill="#d6aa34" stroke="#fff" stroke-width="1" stroke-linejoin="miter"/>
<path d="M166.4 519.1 L166.4 527.9 L161.1 523.5 Z" fill="#d6aa34" stroke="#fff" stroke-width="1" stroke-linejoin="miter"/>
<path d="M156.3 545.3 h2.2 v-2.2 l5.2 3.4 l-5.2 3.4 v-2.2 h-2.2 Z" fill="#0000f0" stroke="#fff" stroke-width="1.6" paint-order="stroke" stroke-linejoin="miter"/>
<path d="M185.9 508.1 L185.9 516.9 L180.6 512.5 Z" fill="#d6aa34" stroke="#fff" stroke-width="1" stroke-linejoin="miter"/>
<path d="M189.9 477.1 L189.9 485.9 L184.6 481.5 Z" fill="#d6aa34" stroke="#fff" stroke-width="1" stroke-linejoin="miter"/>
<path d="M189.9 412.1 L189.9 420.9 L184.6 416.5 Z" fill="#d6aa34" stroke="#fff" stroke-width="1" stroke-linejoin="miter"/>
<path d="M179.9 420.3 h2.2 v-2.2 l5.2 3.4 l-5.2 3.4 v-2.2 h-2.2 Z" fill="#0000f0" stroke="#fff" stroke-width="1.6" paint-order="stroke" stroke-linejoin="miter"/>
<path d="M179.9 430.8 h2.2 v-2.2 l5.2 3.4 l-5.2 3.4 v-2.2 h-2.2 Z" fill="#f00000" stroke="#fff" stroke-width="1.6" paint-order="stroke" stroke-linejoin="miter"/>
<path d="M179.9 439.3 h2.2 v-2.2 l5.2 3.4 l-5.2 3.4 v-2.2 h-2.2 Z" fill="#f00000" stroke="#fff" stroke-width="1.6" paint-order="stroke" stroke-linejoin="miter"/>
<path d="M189.9 446.6 L189.9 455.4 L184.6 451.0 Z" fill="#d6aa34" stroke="#fff" stroke-width="1" stroke-linejoin="miter"/>
<path d="M203.9 407.3 h2.2 v-2.2 l5.2 3.4 l-5.2 3.4 v-2.2 h-2.2 Z" fill="#0000f0" stroke="#fff" stroke-width="1.6" paint-order="stroke" stroke-linejoin="miter"/>
<path d="M241.9 402.1 L241.9 410.9 L236.6 406.5 Z" fill="#d6aa34" stroke="#fff" stroke-width="1" stroke-linejoin="miter"/>
<path d="M227.9 420.8 h2.2 v-2.2 l5.2 3.4 l-5.2 3.4 v-2.2 h-2.2 Z" fill="#f00000" stroke="#fff" stroke-width="1.6" paint-order="stroke" stroke-linejoin="miter"/>
<path d="M237.9 430.6 L237.9 439.4 L232.6 435.0 Z" fill="#d6aa34" stroke="#fff" stroke-width="1" stroke-linejoin="miter"/>
<path d="M207.9 460.3 h2.2 v-2.2 l5.2 3.4 l-5.2 3.4 v-2.2 h-2.2 Z" fill="#f00000" stroke="#fff" stroke-width="1.6" paint-order="stroke" stroke-linejoin="miter"/>
<path d="M217.9 465.1 L217.9 473.9 L212.6 469.5 Z" fill="#d6aa34" stroke="#fff" stroke-width="1" stroke-linejoin="miter"/>
<path d="M247.9 493.3 h2.2 v-2.2 l5.2 3.4 l-5.2 3.4 v-2.2 h-2.2 Z" fill="#0000f0" stroke="#fff" stroke-width="1.6" paint-order="stroke" stroke-linejoin="miter"/>
<path d="M227.9 550.3 h2.2 v-2.2 l5.2 3.4 l-5.2 3.4 v-2.2 h-2.2 Z" fill="#f00000" stroke="#fff" stroke-width="1.6" paint-order="stroke" stroke-linejoin="miter"/>
<path d="M265.9 553.6 L265.9 562.4 L260.6 558.0 Z" fill="#d6aa34" stroke="#fff" stroke-width="1" stroke-linejoin="miter"/>
<path d="M159.9 567.3 h2.2 v-2.2 l5.2 3.4 l-5.2 3.4 v-2.2 h-2.2 Z" fill="#f00000" stroke="#fff" stroke-width="1.6" paint-order="stroke" stroke-linejoin="miter"/>
<path d="M155.5 572.3 h2.2 v-2.2 l5.2 3.4 l-5.2 3.4 v-2.2 h-2.2 Z" fill="#f00000" stroke="#fff" stroke-width="1.6" paint-order="stroke" stroke-linejoin="miter"/>
<path d="M166.5 588.1 L166.5 596.9 L161.2 592.5 Z" fill="#d6aa34" stroke="#fff" stroke-width="1" stroke-linejoin="miter"/>
<path d="M233.9 609.1 L233.9 617.9 L228.6 613.5 Z" fill="#d6aa34" stroke="#fff" stroke-width="1" stroke-linejoin="miter"/>
<path d="M229.9 645.1 L229.9 653.9 L224.6 649.5 Z" fill="#d6aa34" stroke="#fff" stroke-width="1" stroke-linejoin="miter"/>
<path d="M215.9 688.3 h2.2 v-2.2 l5.2 3.4 l-5.2 3.4 v-2.2 h-2.2 Z" fill="#0000f0" stroke="#fff" stroke-width="1.6" paint-order="stroke" stroke-linejoin="miter"/>
<path d="M267.9 583.3 h2.2 v-2.2 l5.2 3.4 l-5.2 3.4 v-2.2 h-2.2 Z" fill="#f00000" stroke="#fff" stroke-width="1.6" paint-order="stroke" stroke-linejoin="miter"/>
<path d="M279.9 610.3 h2.2 v-2.2 l5.2 3.4 l-5.2 3.4 v-2.2 h-2.2 Z" fill="#f00000" stroke="#fff" stroke-width="1.6" paint-order="stroke" stroke-linejoin="miter"/>
<path d="M283.9 619.3 h2.2 v-2.2 l5.2 3.4 l-5.2 3.4 v-2.2 h-2.2 Z" fill="#f00000" stroke="#fff" stroke-width="1.6" paint-order="stroke" stroke-linejoin="miter"/>
<path d="M289.9 625.1 L289.9 633.9 L284.6 629.5 Z" fill="#d6aa34" stroke="#fff" stroke-width="1" stroke-linejoin="miter"/>
<path d="M281.9 651.1 L281.9 659.9 L276.6 655.5 Z" fill="#d6aa34" stroke="#fff" stroke-width="1" stroke-linejoin="miter"/>
<path d="M313.9 640.1 L313.9 648.9 L308.6 644.5 Z" fill="#d6aa34" stroke="#fff" stroke-width="1" stroke-linejoin="miter"/>
<path d="M199.9 321.3 h2.2 v-2.2 l5.2 3.4 l-5.2 3.4 v-2.2 h-2.2 Z" fill="#0000f0" stroke="#fff" stroke-width="1.6" paint-order="stroke" stroke-linejoin="miter"/>
<path d="M197.9 358.1 L197.9 366.9 L192.6 362.5 Z" fill="#d6aa34" stroke="#fff" stroke-width="1" stroke-linejoin="miter"/>
<path d="M179.9 373.3 h2.2 v-2.2 l5.2 3.4 l-5.2 3.4 v-2.2 h-2.2 Z" fill="#0000f0" stroke="#fff" stroke-width="1.6" paint-order="stroke" stroke-linejoin="miter"/>
<path d="M413.9 265.5 L413.9 274.3 L408.6 269.9 Z" fill="#d6aa34" stroke="#fff" stroke-width="1" stroke-linejoin="miter"/>
<path d="M415.9 333.7 h2.2 v-2.2 l5.2 3.4 l-5.2 3.4 v-2.2 h-2.2 Z" fill="#0000f0" stroke="#fff" stroke-width="1.6" paint-order="stroke" stroke-linejoin="miter"/>
<path d="M383.9 373.3 h2.2 v-2.2 l5.2 3.4 l-5.2 3.4 v-2.2 h-2.2 Z" fill="#f00000" stroke="#fff" stroke-width="1.6" paint-order="stroke" stroke-linejoin="miter"/>
<path d="M385.9 400.1 L385.9 408.9 L380.6 404.5 Z" fill="#d6aa34" stroke="#fff" stroke-width="1" stroke-linejoin="miter"/>
<path d="M393.9 405.5 L393.9 414.3 L388.6 409.9 Z" fill="#d6aa34" stroke="#fff" stroke-width="1" stroke-linejoin="miter"/>
<path d="M429.9 412.1 L429.9 420.9 L424.6 416.5 Z" fill="#d6aa34" stroke="#fff" stroke-width="1" stroke-linejoin="miter"/>
<path d="M379.9 474.3 h2.2 v-2.2 l5.2 3.4 l-5.2 3.4 v-2.2 h-2.2 Z" fill="#0000f0" stroke="#fff" stroke-width="1.6" paint-order="stroke" stroke-linejoin="miter"/>
<path d="M423.9 487.3 h2.2 v-2.2 l5.2 3.4 l-5.2 3.4 v-2.2 h-2.2 Z" fill="#0000f0" stroke="#fff" stroke-width="1.6" paint-order="stroke" stroke-linejoin="miter"/>
<path d="M371.9 526.3 h2.2 v-2.2 l5.2 3.4 l-5.2 3.4 v-2.2 h-2.2 Z" fill="#f00000" stroke="#fff" stroke-width="1.6" paint-order="stroke" stroke-linejoin="miter"/>
<path d="M323.9 551.3 h2.2 v-2.2 l5.2 3.4 l-5.2 3.4 v-2.2 h-2.2 Z" fill="#f00000" stroke="#fff" stroke-width="1.6" paint-order="stroke" stroke-linejoin="miter"/>
<path d="M365.9 555.1 L365.9 563.9 L360.6 559.5 Z" fill="#d6aa34" stroke="#fff" stroke-width="1" stroke-linejoin="miter"/>
<path d="M437.9 549.1 L437.9 557.9 L432.6 553.5 Z" fill="#d6aa34" stroke="#fff" stroke-width="1" stroke-linejoin="miter"/>
<path d="M447.9 506.9 h2.2 v-2.2 l5.2 3.4 l-5.2 3.4 v-2.2 h-2.2 Z" fill="#f00000" stroke="#fff" stroke-width="1.6" paint-order="stroke" stroke-linejoin="miter"/>
<path d="M456.3 506.9 h2.2 v-2.2 l5.2 3.4 l-5.2 3.4 v-2.2 h-2.2 Z" fill="#f00000" stroke="#fff" stroke-width="1.6" paint-order="stroke" stroke-linejoin="miter"/>
<path d="M455.9 556.3 h2.2 v-2.2 l5.2 3.4 l-5.2 3.4 v-2.2 h-2.2 Z" fill="#f00000" stroke="#fff" stroke-width="1.6" paint-order="stroke" stroke-linejoin="miter"/>
<path d="M461.9 570.1 L461.9 578.9 L456.6 574.5 Z" fill="#d6aa34" stroke="#fff" stroke-width="1" stroke-linejoin="miter"/>
<path d="M538.9 517.7 L538.9 526.5 L533.6 522.1 Z" fill="#d6aa34" stroke="#fff" stroke-width="1" stroke-linejoin="miter"/>
<path d="M527.9 475.3 h2.2 v-2.2 l5.2 3.4 l-5.2 3.4 v-2.2 h-2.2 Z" fill="#f00000" stroke="#fff" stroke-width="1.6" paint-order="stroke" stroke-linejoin="miter"/>
<path d="M557.9 483.1 L557.9 491.9 L552.6 487.5 Z" fill="#d6aa34" stroke="#fff" stroke-width="1" stroke-linejoin="miter"/>
<path d="M578.5 483.7 L578.5 492.5 L573.2 488.1 Z" fill="#d6aa34" stroke="#fff" stroke-width="1" stroke-linejoin="miter"/>
<path d="M551.9 420.3 h2.2 v-2.2 l5.2 3.4 l-5.2 3.4 v-2.2 h-2.2 Z" fill="#f00000" stroke="#fff" stroke-width="1.6" paint-order="stroke" stroke-linejoin="miter"/>
<path d="M553.9 434.7 L553.9 443.5 L548.6 439.1 Z" fill="#d6aa34" stroke="#fff" stroke-width="1" stroke-linejoin="miter"/>
<path d="M572.5 529.7 h2.2 v-2.2 l5.2 3.4 l-5.2 3.4 v-2.2 h-2.2 Z" fill="#0000f0" stroke="#fff" stroke-width="1.6" paint-order="stroke" stroke-linejoin="miter"/>
<path d="M605.9 499.5 L605.9 508.3 L600.6 503.9 Z" fill="#d6aa34" stroke="#fff" stroke-width="1" stroke-linejoin="miter"/>
<path d="M349.9 591.1 L349.9 599.9 L344.6 595.5 Z" fill="#d6aa34" stroke="#fff" stroke-width="1" stroke-linejoin="miter"/>
<path d="M351.3 598.3 h2.2 v-2.2 l5.2 3.4 l-5.2 3.4 v-2.2 h-2.2 Z" fill="#0000f0" stroke="#fff" stroke-width="1.6" paint-order="stroke" stroke-linejoin="miter"/>
<path d="M355.9 588.3 h2.2 v-2.2 l5.2 3.4 l-5.2 3.4 v-2.2 h-2.2 Z" fill="#0000f0" stroke="#fff" stroke-width="1.6" paint-order="stroke" stroke-linejoin="miter"/>
<path d="M369.9 581.1 L369.9 589.9 L364.6 585.5 Z" fill="#d6aa34" stroke="#fff" stroke-width="1" stroke-linejoin="miter"/>
<path d="M319.9 626.3 h2.2 v-2.2 l5.2 3.4 l-5.2 3.4 v-2.2 h-2.2 Z" fill="#f00000" stroke="#fff" stroke-width="1.6" paint-order="stroke" stroke-linejoin="miter"/>
<path d="M475.9 581.7 h2.2 v-2.2 l5.2 3.4 l-5.2 3.4 v-2.2 h-2.2 Z" fill="#0000f0" stroke="#fff" stroke-width="1.6" paint-order="stroke" stroke-linejoin="miter"/>
<path d="M485.9 587.1 L485.9 595.9 L480.6 591.5 Z" fill="#d6aa34" stroke="#fff" stroke-width="1" stroke-linejoin="miter"/>
<path d="M507.9 591.3 h2.2 v-2.2 l5.2 3.4 l-5.2 3.4 v-2.2 h-2.2 Z" fill="#f00000" stroke="#fff" stroke-width="1.6" paint-order="stroke" stroke-linejoin="miter"/>
<path d="M486.9 636.7 L486.9 645.5 L481.6 641.1 Z" fill="#d6aa34" stroke="#fff" stroke-width="1" stroke-linejoin="miter"/>
<path d="M514.9 665.5 L514.9 674.3 L509.6 669.9 Z" fill="#d6aa34" stroke="#fff" stroke-width="1" stroke-linejoin="miter"/>
<path d="M603.9 644.9 h2.2 v-2.2 l5.2 3.4 l-5.2 3.4 v-2.2 h-2.2 Z" fill="#0000f0" stroke="#fff" stroke-width="1.6" paint-order="stroke" stroke-linejoin="miter"/>
<path d="M626.5 672.1 L626.5 680.9 L621.2 676.5 Z" fill="#d6aa34" stroke="#fff" stroke-width="1" stroke-linejoin="miter"/>
<path d="M630.5 593.1 L630.5 601.9 L625.2 597.5 Z" fill="#d6aa34" stroke="#fff" stroke-width="1" stroke-linejoin="miter"/>
<path d="M647.9 533.3 h2.2 v-2.2 l5.2 3.4 l-5.2 3.4 v-2.2 h-2.2 Z" fill="#f00000" stroke="#fff" stroke-width="1.6" paint-order="stroke" stroke-linejoin="miter"/>
<path d="M674.5 543.1 L674.5 551.9 L669.2 547.5 Z" fill="#d6aa34" stroke="#fff" stroke-width="1" stroke-linejoin="miter"/>
<path d="M687.9 487.7 h2.2 v-2.2 l5.2 3.4 l-5.2 3.4 v-2.2 h-2.2 Z" fill="#f00000" stroke="#fff" stroke-width="1.6" paint-order="stroke" stroke-linejoin="miter"/>
<path d="M671.9 396.3 h2.2 v-2.2 l5.2 3.4 l-5.2 3.4 v-2.2 h-2.2 Z" fill="#f00000" stroke="#fff" stroke-width="1.6" paint-order="stroke" stroke-linejoin="miter"/>
<path d="M686.5 451.1 L686.5 459.9 L681.2 455.5 Z" fill="#d6aa34" stroke="#fff" stroke-width="1" stroke-linejoin="miter"/>
<path d="M731.9 423.7 h2.2 v-2.2 l5.2 3.4 l-5.2 3.4 v-2.2 h-2.2 Z" fill="#f00000" stroke="#fff" stroke-width="1.6" paint-order="stroke" stroke-linejoin="miter"/>
<path d="M770.5 427.1 L770.5 435.9 L765.2 431.5 Z" fill="#d6aa34" stroke="#fff" stroke-width="1" stroke-linejoin="miter"/>
<path d="M763.9 456.3 h2.2 v-2.2 l5.2 3.4 l-5.2 3.4 v-2.2 h-2.2 Z" fill="#f00000" stroke="#fff" stroke-width="1.6" paint-order="stroke" stroke-linejoin="miter"/>
<path d="M827.9 396.7 h2.2 v-2.2 l5.2 3.4 l-5.2 3.4 v-2.2 h-2.2 Z" fill="#0000f0" stroke="#fff" stroke-width="1.6" paint-order="stroke" stroke-linejoin="miter"/>
<path d="M879.9 378.3 h2.2 v-2.2 l5.2 3.4 l-5.2 3.4 v-2.2 h-2.2 Z" fill="#0000f0" stroke="#fff" stroke-width="1.6" paint-order="stroke" stroke-linejoin="miter"/>
<path d="M889.9 388.5 L889.9 397.3 L884.6 392.9 Z" fill="#d6aa34" stroke="#fff" stroke-width="1" stroke-linejoin="miter"/>
<path d="M855.9 309.3 h2.2 v-2.2 l5.2 3.4 l-5.2 3.4 v-2.2 h-2.2 Z" fill="#f00000" stroke="#fff" stroke-width="1.6" paint-order="stroke" stroke-linejoin="miter"/>
<path d="M866.5 307.7 L866.5 316.5 L861.2 312.1 Z" fill="#d6aa34" stroke="#fff" stroke-width="1" stroke-linejoin="miter"/>
<path d="M963.9 310.3 h2.2 v-2.2 l5.2 3.4 l-5.2 3.4 v-2.2 h-2.2 Z" fill="#0000f0" stroke="#fff" stroke-width="1.6" paint-order="stroke" stroke-linejoin="miter"/>
<path d="M981.9 328.1 L981.9 336.9 L976.6 332.5 Z" fill="#d6aa34" stroke="#fff" stroke-width="1" stroke-linejoin="miter"/>
<path d="M965.9 347.1 L965.9 355.9 L960.6 351.5 Z" fill="#d6aa34" stroke="#fff" stroke-width="1" stroke-linejoin="miter"/>
<path d="M955.9 369.3 h2.2 v-2.2 l5.2 3.4 l-5.2 3.4 v-2.2 h-2.2 Z" fill="#f00000" stroke="#fff" stroke-width="1.6" paint-order="stroke" stroke-linejoin="miter"/>
<path d="M1007.9 398.7 h2.2 v-2.2 l5.2 3.4 l-5.2 3.4 v-2.2 h-2.2 Z" fill="#0000f0" stroke="#fff" stroke-width="1.6" paint-order="stroke" stroke-linejoin="miter"/>
<path d="M1018.4 395.5 L1018.4 404.3 L1013.1 399.9 Z" fill="#d6aa34" stroke="#fff" stroke-width="1" stroke-linejoin="miter"/>
<path d="M1073.9 362.1 L1073.9 370.9 L1068.6 366.5 Z" fill="#d6aa34" stroke="#fff" stroke-width="1" stroke-linejoin="miter"/>
<path d="M1067.9 377.3 h2.2 v-2.2 l5.2 3.4 l-5.2 3.4 v-2.2 h-2.2 Z" fill="#f00000" stroke="#fff" stroke-width="1.6" paint-order="stroke" stroke-linejoin="miter"/>
<path d="M1085.9 423.1 L1085.9 431.9 L1080.6 427.5 Z" fill="#d6aa34" stroke="#fff" stroke-width="1" stroke-linejoin="miter"/>
<path d="M1079.9 470.9 h2.2 v-2.2 l5.2 3.4 l-5.2 3.4 v-2.2 h-2.2 Z" fill="#0000f0" stroke="#fff" stroke-width="1.6" paint-order="stroke" stroke-linejoin="miter"/>
<path d="M1090.5 467.1 L1090.5 475.9 L1085.2 471.5 Z" fill="#d6aa34" stroke="#fff" stroke-width="1" stroke-linejoin="miter"/>
<path d="M1090.5 480.5 L1090.5 489.3 L1085.2 484.9 Z" fill="#d6aa34" stroke="#fff" stroke-width="1" stroke-linejoin="miter"/>
<path d="M1099.9 485.7 h2.2 v-2.2 l5.2 3.4 l-5.2 3.4 v-2.2 h-2.2 Z" fill="#f00000" stroke="#fff" stroke-width="1.6" paint-order="stroke" stroke-linejoin="miter"/>
<path d="M1129.9 497.1 L1129.9 505.9 L1124.6 501.5 Z" fill="#d6aa34" stroke="#fff" stroke-width="1" stroke-linejoin="miter"/>
<path d="M1119.9 533.3 h2.2 v-2.2 l5.2 3.4 l-5.2 3.4 v-2.2 h-2.2 Z" fill="#f00000" stroke="#fff" stroke-width="1.6" paint-order="stroke" stroke-linejoin="miter"/>
<path d="M1143.9 534.3 h2.2 v-2.2 l5.2 3.4 l-5.2 3.4 v-2.2 h-2.2 Z" fill="#0000f0" stroke="#fff" stroke-width="1.6" paint-order="stroke" stroke-linejoin="miter"/>
<path d="M1154.5 532.1 L1154.5 540.9 L1149.2 536.5 Z" fill="#d6aa34" stroke="#fff" stroke-width="1" stroke-linejoin="miter"/>
<path d="M1151.9 570.7 h2.2 v-2.2 l5.2 3.4 l-5.2 3.4 v-2.2 h-2.2 Z" fill="#f00000" stroke="#fff" stroke-width="1.6" paint-order="stroke" stroke-linejoin="miter"/>
<path d="M1199.3 534.3 h2.2 v-2.2 l5.2 3.4 l-5.2 3.4 v-2.2 h-2.2 Z" fill="#f00000" stroke="#fff" stroke-width="1.6" paint-order="stroke" stroke-linejoin="miter"/>
<path d="M1214.5 553.1 L1214.5 561.9 L1209.2 557.5 Z" fill="#d6aa34" stroke="#fff" stroke-width="1" stroke-linejoin="miter"/>
<path d="M1225.9 506.1 L1225.9 514.9 L1220.6 510.5 Z" fill="#d6aa34" stroke="#fff" stroke-width="1" stroke-linejoin="miter"/>
<path d="M1233.9 466.1 L1233.9 474.9 L1228.6 470.5 Z" fill="#d6aa34" stroke="#fff" stroke-width="1" stroke-linejoin="miter"/>
<path d="M1243.9 459.3 h2.2 v-2.2 l5.2 3.4 l-5.2 3.4 v-2.2 h-2.2 Z" fill="#0000f0" stroke="#fff" stroke-width="1.6" paint-order="stroke" stroke-linejoin="miter"/>
<path d="M1322.5 456.1 L1322.5 464.9 L1317.2 460.5 Z" fill="#d6aa34" stroke="#fff" stroke-width="1" stroke-linejoin="miter"/>
<path d="M1251.9 440.9 h2.2 v-2.2 l5.2 3.4 l-5.2 3.4 v-2.2 h-2.2 Z" fill="#0000f0" stroke="#fff" stroke-width="1.6" paint-order="stroke" stroke-linejoin="miter"/>
<path d="M1262.5 437.1 L1262.5 445.9 L1257.2 441.5 Z" fill="#d6aa34" stroke="#fff" stroke-width="1" stroke-linejoin="miter"/>
<path d="M1151.3 651.3 h2.2 v-2.2 l5.2 3.4 l-5.2 3.4 v-2.2 h-2.2 Z" fill="#0000f0" stroke="#fff" stroke-width="1.6" paint-order="stroke" stroke-linejoin="miter"/>
<path d="M1162.9 648.1 L1162.9 656.9 L1157.6 652.5 Z" fill="#d6aa34" stroke="#fff" stroke-width="1" stroke-linejoin="miter"/>
<path d="M1178.5 626.1 L1178.5 634.9 L1173.2 630.5 Z" fill="#d6aa34" stroke="#fff" stroke-width="1" stroke-linejoin="miter"/>
<path d="M1247.9 387.3 h2.2 v-2.2 l5.2 3.4 l-5.2 3.4 v-2.2 h-2.2 Z" fill="#f00000" stroke="#fff" stroke-width="1.6" paint-order="stroke" stroke-linejoin="miter"/>
<path d="M1258.5 382.1 L1258.5 390.9 L1253.2 386.5 Z" fill="#d6aa34" stroke="#fff" stroke-width="1" stroke-linejoin="miter"/>
<path d="M1247.9 419.7 h2.2 v-2.2 l5.2 3.4 l-5.2 3.4 v-2.2 h-2.2 Z" fill="#0000f0" stroke="#fff" stroke-width="1.6" paint-order="stroke" stroke-linejoin="miter"/>
<path d="M1269.9 413.7 L1269.9 422.5 L1264.6 418.1 Z" fill="#d6aa34" stroke="#fff" stroke-width="1" stroke-linejoin="miter"/>
<path d="M1370.5 180.1 L1370.5 188.9 L1365.2 184.5 Z" fill="#d6aa34" stroke="#fff" stroke-width="1" stroke-linejoin="miter"/>
<path d="M1355.9 205.3 h2.2 v-2.2 l5.2 3.4 l-5.2 3.4 v-2.2 h-2.2 Z" fill="#0000f0" stroke="#fff" stroke-width="1.6" paint-order="stroke" stroke-linejoin="miter"/>
<path d="M1322.5 280.1 L1322.5 288.9 L1317.2 284.5 Z" fill="#d6aa34" stroke="#fff" stroke-width="1" stroke-linejoin="miter"/>
</g>
<rect x="4.5" y="126.5" width="1530" height="644" fill="none" stroke="#000" stroke-width="1"/>
<path d="M1535 163.5 H1537" stroke="#000" stroke-width="1"/>
<path d="M1535 212.5 H1537" stroke="#000" stroke-width="1"/>
<path d="M1535 261.5 H1537" stroke="#000" stroke-width="1"/>
<path d="M1535 310.5 H1537" stroke="#000" stroke-width="1"/>
<path d="M1535 359.5 H1537" stroke="#000" stroke-width="1"/>
<path d="M1535 408.5 H1537" stroke="#000" stroke-width="1"/>
<path d="M1535 457.5 H1537" stroke="#000" stroke-width="1"/>
<path d="M1535 506.5 H1537" stroke="#000" stroke-width="1"/>
<path d="M1535 555.5 H1537" stroke="#000" stroke-width="1"/>
<path d="M1535 604.5 H1537" stroke="#000" stroke-width="1"/>
<path d="M1535 653.5 H1537" stroke="#000" stroke-width="1"/>
<path d="M1535 702.5 H1537" stroke="#000" stroke-width="1"/>
<path d="M1535 751.5 H1537" stroke="#000" stroke-width="1"/>
<path d="M5.5 771 V774" stroke="#000" stroke-width="1"/>
<path d="M101.5 771 V774" stroke="#000" stroke-width="1"/>
<path d="M197.5 771 V774" stroke="#000" stroke-width="1"/>
<path d="M293.5 771 V774" stroke="#000" stroke-width="1"/>
<path d="M389.5 771 V774" stroke="#000" stroke-width="1"/>
<path d="M485.5 771 V774" stroke="#000" stroke-width="1"/>
<path d="M581.5 771 V774" stroke="#000" stroke-width="1"/>
<path d="M677.5 771 V774" stroke="#000" stroke-width="1"/>
<path d="M773.5 771 V774" stroke="#000" stroke-width="1"/>
<path d="M869.5 771 V774" stroke="#000" stroke-width="1"/>
<path d="M965.5 771 V774" stroke="#000" stroke-width="1"/>
<path d="M1061.5 771 V774" stroke="#000" stroke-width="1"/>
<path d="M1157.5 771 V774" stroke="#000" stroke-width="1"/>
<path d="M1253.5 771 V774" stroke="#000" stroke-width="1"/>
<path d="M1349.5 771 V774" stroke="#000" stroke-width="1"/>
<path d="M1373 127 L1385 127 L1379 133 Z" fill="#c8c8c8" shape-rendering="auto"/>
<path d="M8 134 L17 134 L12.5 139 Z" fill="#000" shape-rendering="auto"/>
</svg>
<div class="t" style="left:23.4px;top:131px;font-size:11.5px;color:#000;letter-spacing:-0.312px;">EURGBPmicro,H4</div>
<div class="t" style="left:123.9px;top:131px;font-size:11.5px;color:#000;letter-spacing:0.608px;">0.87420 0.87438 0.87334 0.87381</div>
<div class="t" style="left:14.4px;top:172px;font-size:12.5px;color:#000;letter-spacing:-0.026px;">#43030765 sell 0.30</div>
<div class="t" style="left:14.4px;top:214px;font-size:12.5px;color:#000;letter-spacing:0.203px;">#43030765 tp</div>
<div class="t" style="left:14.4px;top:223px;font-size:12.5px;color:#000;letter-spacing:-0.026px;">#43009819 sell 0.30</div>
<div class="t" style="left:14.4px;top:286px;font-size:12.5px;color:#000;letter-spacing:0.203px;">#43009819 tp</div>
<div class="t" style="left:14.4px;top:312px;font-size:12.5px;color:#000;letter-spacing:-0.026px;">#42839935 sell 0.30</div>
<div class="t" style="left:14.4px;top:390px;font-size:12.5px;color:#000;letter-spacing:0.203px;">#42839935 tp</div>
<div class="t" style="left:14.4px;top:404px;font-size:12.5px;color:#000;letter-spacing:-0.026px;">#42878905 sell 0.30</div>
<div class="t" style="left:14.4px;top:441px;font-size:12.5px;color:#000;letter-spacing:0.203px;">#42878905 tp</div>
<div class="t" style="left:14.4px;top:492px;font-size:12.5px;color:#000;letter-spacing:-0.026px;">#42801271 sell 0.30</div>
<div class="t" style="left:14.4px;top:561px;font-size:12.5px;color:#000;letter-spacing:0.203px;">#42801271 tp</div>
<div class="t" style="left:14.4px;top:578px;font-size:12.5px;color:#000;letter-spacing:-0.026px;">#42739761 sell 0.30</div>
<div class="t" style="left:14.4px;top:642px;font-size:12.5px;color:#000;letter-spacing:0.203px;">#42739761 tp</div>
<div class="t" style="left:14.4px;top:652px;font-size:12.5px;color:#000;letter-spacing:-0.026px;">#42706376 sell 0.30</div>
<div class="t" style="left:14.4px;top:728px;font-size:12.5px;color:#000;letter-spacing:0.203px;">#42706376 tp</div>
<div class="t" style="left:1541.3px;top:158px;font-size:12.5px;color:#000;letter-spacing:0.031px;">0.87445</div>
<div class="t" style="left:1541.3px;top:207px;font-size:12.5px;color:#000;letter-spacing:0.031px;">0.87220</div>
<div class="t" style="left:1541.3px;top:256px;font-size:12.5px;color:#000;letter-spacing:0.031px;">0.86990</div>
<div class="t" style="left:1541.3px;top:305px;font-size:12.5px;color:#000;letter-spacing:0.031px;">0.86765</div>
<div class="t" style="left:1541.3px;top:354px;font-size:12.5px;color:#000;letter-spacing:0.031px;">0.86535</div>
<div class="t" style="left:1541.3px;top:403px;font-size:12.5px;color:#000;letter-spacing:0.031px;">0.86310</div>
<div class="t" style="left:1541.3px;top:452px;font-size:12.5px;color:#000;letter-spacing:0.031px;">0.86080</div>
<div class="t" style="left:1541.3px;top:501px;font-size:12.5px;color:#000;letter-spacing:0.031px;">0.85855</div>
<div class="t" style="left:1541.3px;top:550px;font-size:12.5px;color:#000;letter-spacing:0.031px;">0.85625</div>
<div class="t" style="left:1541.3px;top:599px;font-size:12.5px;color:#000;letter-spacing:0.031px;">0.85400</div>
<div class="t" style="left:1541.3px;top:648px;font-size:12.5px;color:#000;letter-spacing:0.031px;">0.85170</div>
<div class="t" style="left:1541.3px;top:697px;font-size:12.5px;color:#000;letter-spacing:0.031px;">0.84945</div>
<div class="t" style="left:1541.3px;top:746px;font-size:12.5px;color:#000;letter-spacing:0.031px;">0.84715</div>
<div class="abs" style="left:1536px;top:166px;width:56px;height:4px;background:#ff4500"></div>
<div class="abs" style="left:1536px;top:169px;width:56px;height:15px;background:#000"></div>
<div class="abs" style="left:1536px;top:169px;width:56px;height:1px;background:repeating-linear-gradient(90deg,#ff4500 0 7px,#fff 7px 10px,#ff4500 10px 12px,#fff 12px 16px)"></div>
<div class="t" style="left:1541.3px;top:172px;font-size:12.5px;color:#fff;letter-spacing:0.031px;">0.87381</div>
<div class="t" style="left:4.5px;top:776px;font-size:12.5px;color:#000;letter-spacing:-0.109px;">27 Feb 2019</div>
<div class="t" style="left:100.5px;top:776px;font-size:12.5px;color:#000;letter-spacing:-0.155px;">5 Mar 04:00</div>
<div class="t" style="left:196.5px;top:776px;font-size:12.5px;color:#000;letter-spacing:-0.061px;">11 Mar 00:00</div>
<div class="t" style="left:292.5px;top:776px;font-size:12.5px;color:#000;letter-spacing:-0.138px;">15 Mar 00:00</div>
<div class="t" style="left:388.5px;top:776px;font-size:12.5px;color:#000;letter-spacing:-0.138px;">20 Mar 20:00</div>
<div class="t" style="left:484.5px;top:776px;font-size:12.5px;color:#000;letter-spacing:-0.138px;">26 Mar 16:00</div>
<div class="t" style="left:580.5px;top:776px;font-size:12.5px;color:#000;letter-spacing:0.096px;">1 Apr 16:00</div>
<div class="t" style="left:676.5px;top:776px;font-size:12.5px;color:#000;letter-spacing:0.096px;">5 Apr 16:00</div>
<div class="t" style="left:772.5px;top:776px;font-size:12.5px;color:#000;letter-spacing:0.170px;">11 Apr 16:00</div>
<div class="t" style="left:868.5px;top:776px;font-size:12.5px;color:#000;letter-spacing:0.092px;">17 Apr 16:00</div>
<div class="t" style="left:964.5px;top:776px;font-size:12.5px;color:#000;letter-spacing:0.092px;">23 Apr 16:00</div>
<div class="t" style="left:1060.5px;top:776px;font-size:12.5px;color:#000;letter-spacing:0.092px;">29 Apr 16:00</div>
<div class="t" style="left:1156.5px;top:776px;font-size:12.5px;color:#000;letter-spacing:-0.163px;">3 May 16:00</div>
<div class="t" style="left:1252.5px;top:776px;font-size:12.5px;color:#000;letter-spacing:-0.163px;">9 May 16:00</div>
<div class="t" style="left:1348.5px;top:776px;font-size:12.5px;color:#000;letter-spacing:-0.145px;">15 May 16:00</div>
<div class="abs" style="left:0;top:794px;width:1600px;height:2px;background:#f0f0f0"></div>
<div class="abs" style="left:0;top:796px;width:1600px;height:1px;background:#000"></div>
<div class="abs" style="left:0;top:797px;width:1600px;height:24px;background:#f0f0f0"></div>
<div class="abs" style="left:0;top:794px;width:1px;height:27px;background:#bdbdbd"></div><div class="abs" style="left:1px;top:794px;width:1px;height:27px;background:#8a8a8a"></div>
<div class="t" style="left:20px;top:801px;font-size:14.5px;color:#868686;letter-spacing:0.126px;">AUDCADmicro,H4</div>
<div class="t" style="left:168px;top:801px;font-size:14.5px;color:#868686;letter-spacing:-0.030px;">AUDCHFmicro,H4</div>
<div class="t" style="left:312px;top:801px;font-size:14.5px;color:#868686;letter-spacing:0.256px;">AUDNZDmicro,H4</div>
<div class="t" style="left:461px;top:801px;font-size:14.5px;color:#868686;letter-spacing:-0.529px;">CHFJPYmicro,H4</div>
<div class="t" style="left:596.5px;top:801px;font-size:14.5px;color:#868686;letter-spacing:-0.160px;">EURAUDmicro,H4</div>
<div class="t" style="left:740px;top:801px;font-size:14.5px;color:#868686;letter-spacing:-0.352px;">EURCHFmicro,H4</div>
<div class="t" style="left:1021.5px;top:801px;font-size:14.5px;color:#868686;letter-spacing:-0.622px;">EURJPYmicro,H4</div>
<div class="t" style="left:1157px;top:801px;font-size:14.5px;color:#868686;letter-spacing:-0.231px;">EURUSDmicro,H4</div>
<div class="t" style="left:1300px;top:801px;font-size:14.5px;color:#868686;letter-spacing:-0.083px;">GBPAUDmicro,H4</div>
<div class="t" style="left:1443.5px;top:801px;font-size:14.5px;color:#868686;letter-spacing:-0.168px;">GBPCADmicro,H</div>
<div class="abs" style="left:155px;top:800px;width:1px;height:18px;background:#8c8c8c"></div>
<div class="abs" style="left:299px;top:800px;width:1px;height:18px;background:#8c8c8c"></div>
<div class="abs" style="left:447px;top:800px;width:1px;height:18px;background:#8c8c8c"></div>
<div class="abs" style="left:583px;top:800px;width:1px;height:18px;background:#8c8c8c"></div>
<div class="abs" style="left:727px;top:800px;width:1px;height:18px;background:#8c8c8c"></div>
<div class="abs" style="left:1143px;top:800px;width:1px;height:18px;background:#8c8c8c"></div>
<div class="abs" style="left:1287px;top:800px;width:1px;height:18px;background:#8c8c8c"></div>
<div class="abs" style="left:1431px;top:800px;width:1px;height:18px;background:#8c8c8c"></div>
<div class="abs" style="left:867px;top:796px;width:140px;height:24px;background:#fff;border:1px solid #000;border-top:none"></div>
<div class="t" style="left:880px;top:801px;font-size:14.5px;color:#000;letter-spacing:-0.410px;">EURGBPmicro,H4</div>
<div class="abs" style="left:1554px;top:797px;width:46px;height:23px;background:#f0f0f0"></div>
<svg class="abs" style="left:1556px;top:797px" width="44" height="23" viewBox="0 0 44 23"><path d="M7.6 6 L2.6 10.4 L7.6 14.6 Z" fill="#b4b4b4"/><path d="M27 6.5 L32 11 L27 15.5 Z" fill="#000"/></svg>
<div class="abs" style="left:0;top:821px;width:1600px;height:29px;background:#f0f0f0"></div>
<div class="t" style="left:3px;top:831px;font-size:14.5px;color:#111;letter-spacing:-0.116px;">Pre nápovedu stlačte F1</div>
<div class="t" style="left:733px;top:831px;font-size:14.5px;color:#111;letter-spacing:-0.111px;">Legy</div>
<div class="t" style="left:882.5px;top:831px;font-size:14.5px;color:#111;letter-spacing:-0.305px;">2019.04.10 20:00</div>
<div class="t" style="left:1013.5px;top:831px;font-size:14.5px;color:#111;letter-spacing:-0.325px;">O: 0.85980</div>
<div class="t" style="left:1102.5px;top:831px;font-size:14.5px;color:#111;letter-spacing:-0.244px;">H: 0.86152</div>
<div class="t" style="left:1191.5px;top:831px;font-size:14.5px;color:#111;letter-spacing:-0.454px;">L: 0.85927</div>
<div class="t" style="left:1276.5px;top:831px;font-size:14.5px;color:#111;letter-spacing:-0.494px;">C: 0.86091</div>
<div class="t" style="left:1363px;top:831px;font-size:14.5px;color:#111;letter-spacing:-0.117px;">V: 11853</div>
<div class="t" style="left:1483.5px;top:831px;font-size:14.5px;color:#111;letter-spacing:0.171px;">630/3 kb</div>
<div class="ssep" style="left:726px"></div>
<div class="ssep" style="left:876px"></div>
<div class="ssep" style="left:1006px"></div>
<div class="ssep" style="left:1096px"></div>
<div class="ssep" style="left:1185px"></div>
<div class="ssep" style="left:1270px"></div>
<div class="ssep" style="left:1356px"></div>
<div class="ssep" style="left:1441px"></div>
<svg class="abs" style="left:1447px;top:828px" width="33" height="16" viewBox="0 0 33 16" shape-rendering="crispEdges"><rect x="0.0" y="0" width="3" height="11.6" fill="#6b8c00"/><rect x="0.0" y="11.6" width="3" height="4" fill="#0a4568"/><rect x="4.0" y="0" width="3" height="10.6" fill="#6b8c00"/><rect x="4.0" y="10.6" width="3" height="5" fill="#0a4568"/><rect x="8.0" y="0" width="3" height="9.6" fill="#6b8c00"/><rect x="8.0" y="9.6" width="3" height="6" fill="#0a4568"/><rect x="12.0" y="0" width="3" height="8.1" fill="#6b8c00"/><rect x="12.0" y="8.1" width="3" height="7.5" fill="#0a4568"/><rect x="16.0" y="0" width="3" height="5.6" fill="#6b8c00"/><rect x="16.0" y="5.6" width="3" height="10" fill="#0a4568"/><rect x="20.0" y="0" width="3" height="4.6" fill="#6b8c00"/><rect x="20.0" y="4.6" width="3" height="11" fill="#0a4568"/><rect x="24.0" y="0" width="3" height="3.1" fill="#6b8c00"/><rect x="24.0" y="3.1" width="3" height="12.5" fill="#0a4568"/><rect x="28.0" y="0" width="3" height="1.6" fill="#6b8c00"/><rect x="28.0" y="1.6" width="3" height="14" fill="#0a4568"/></svg>
<div class="abs" style="left:0;top:850px;width:1600px;height:50px;background:#0c1018"></div>
<svg class="abs" style="left:20px;top:865px" width="21" height="21" viewBox="0 0 21 21" ><path d="M0 3 L8.6 1.8 V9.6 H0 Z M9.8 1.6 L20.4 0 V9.6 H9.8 Z M0 10.8 H8.6 V18.6 L0 17.4 Z M9.8 10.8 H20.4 V20.4 L9.8 18.8 Z" fill="#fff"/></svg>
<svg class="abs" style="left:79px;top:864px" width="23" height="23" viewBox="0 0 23 23" ><circle cx="13.8" cy="8.8" r="6.6" fill="none" stroke="#fff" stroke-width="1.5"/><path d="M9.2 13.6 L1.4 21.4" stroke="#fff" stroke-width="1.6"/></svg>
<svg class="abs" style="left:139px;top:865px" width="23" height="20" viewBox="0 0 23 20" ><path d="M1 3.4 V0.8 H13 V3.4 M1 16 V18.6 H13 V16" stroke="#fff" stroke-width="1.4" fill="none"/><rect x="1.2" y="5.2" width="11.6" height="8.8" fill="none" stroke="#fff" stroke-width="1.5"/>
<path d="M19.6 0 V19.4" stroke="#fff" stroke-width="1.5"/><rect x="17.8" y="6.2" width="3.6" height="3.6" fill="#fff"/></svg>
<svg class="abs" style="left:200px;top:861px" width="28" height="28" viewBox="0 0 28 28" ><path d="M2.2 13 C3.2 5.6 8.4 1.4 14.6 1.4 C22 1.4 26 6.8 26 13.6 V16 H10 C10.4 19.4 13 21.4 17 21.4 C19.8 21.4 22.4 20.6 24.6 19.4 V24.4 C22 25.8 19.2 26.6 15.8 26.6 C8.4 26.6 4.6 22 4.6 16.4 C4.6 12.6 6.8 9.6 10 8.2 C6.6 8.6 3.8 10.6 2.2 13 Z M10 12 H19.4 C19.4 9 17.6 7 14.8 7 C12.2 7 10.4 9 10 12 Z" fill="#1c86e4" fill-rule="evenodd"/></svg>
<svg class="abs" style="left:262px;top:862px" width="29" height="25" viewBox="0 0 29 25" ><path d="M1 3 Q1 1.6 2.4 1.6 H10 L12.4 4.2 H26.6 Q28 4.2 28 5.6 V23.4 H1 Z" fill="#f6d56a"/>
<path d="M1 6.4 H28 V23.6 H1 Z" fill="#fbe28c"/>
<path d="M7 23.6 V14.6 Q7 13.4 8.2 13.4 H20.8 Q22 13.4 22 14.6 V23.6 H19.2 V17.4 H9.8 V23.6 Z" fill="#3a96dd"/><rect x="9.8" y="17.4" width="9.4" height="6.2" fill="#6fb8ee"/></svg>
<svg class="abs" style="left:322px;top:859px" width="31" height="31" viewBox="0 0 31 31" ><path d="M9.4 9 V6.6 Q9.4 2 13 2 Q16.6 2 16.6 6 V9 M11.8 9 V6.8 Q12 4 15.4 4 Q18.8 4 18.8 7 V9" stroke="#d8d8d8" stroke-width="1.3" fill="none"/>
<path d="M1 8.8 H29.6 V28.2 Q29.6 29.8 28 29.8 H2.6 Q1 29.8 1 28.2 Z" fill="#fff"/>
<rect x="8.8" y="13" width="6" height="5.8" fill="#f25022"/><rect x="15.8" y="13" width="6" height="5.8" fill="#7fba00"/>
<rect x="8.8" y="19.8" width="6" height="5.8" fill="#00a4ef"/><rect x="15.8" y="19.8" width="6" height="5.8" fill="#ffb900"/></svg>
<svg class="abs" style="left:384px;top:861px" width="32" height="27" viewBox="0 0 32 27" ><path d="M1 10 L16 1 L31 10 V25.4 H1 Z" fill="#fff"/><path d="M1.6 11 L30.4 11 L19.8 17.6 L27.4 23.2 L17 18.4 Z" fill="#0c1018"/></svg>
<svg class="abs" style="left:447px;top:860px" width="30" height="30" viewBox="0 0 30 30" ><circle cx="15" cy="15" r="14" fill="#db4437"/>
<path d="M15 15 L2.9 8 A14 14 0 0 0 12.2 28.7 Z" fill="#0f9d58"/>
<path d="M15 15 L12.2 28.7 A14 14 0 0 0 28.4 11 L15 11 Z" fill="#ffcd40"/>
<path d="M15 15 L28.4 11 A14 14 0 0 0 2.9 8 Z" fill="#db4437"/>
<path d="M15 15 L2.9 8 A14 14 0 0 0 8 27.1 L15 15 Z" fill="#0f9d58"/>
<circle cx="15" cy="15" r="6.6" fill="#f1f1f1"/><circle cx="15" cy="15" r="5.2" fill="#4285f4"/></svg>
<div class="abs" style="left:494px;top:850px;width:61px;height:50px;background:#3a3f48"></div>
<div class="abs" style="left:494px;top:897px;width:61px;height:3px;background:#76b9ed"></div>
<svg class="abs" style="left:509px;top:860px" width="31" height="30" viewBox="0 0 31 30" ><defs><linearGradient id="xg" x1="0" y1="0" x2="0" y2="1"><stop offset="0" stop-color="#3a3a3a"/><stop offset="0.5" stop-color="#141414"/><stop offset="1" stop-color="#000"/></linearGradient></defs>
<rect x="0" y="0" width="30" height="29.4" rx="3.4" fill="url(#xg)"/>
<path d="M3.6 10.2 L6.4 14.4 L3.4 19 L5.4 19 L8.2 14.4 L5.6 10.2 Z" fill="#e8202a"/>
<text x="7.4" y="19.4" font-family="Liberation Sans" font-weight="bold" font-style="italic" font-size="12.6" fill="#fff" textLength="19.6" lengthAdjust="spacingAndGlyphs">XM</text></svg>
<svg class="abs" style="left:1288px;top:864px" width="21" height="21" viewBox="0 0 21 21" ><circle cx="13.6" cy="5" r="3.5" fill="none" stroke="#fff" stroke-width="1.4"/><path d="M7.6 15.6 Q8.4 9.6 13.6 9.6 Q18.6 9.6 19.6 14" stroke="#fff" stroke-width="1.4" fill="none"/>
<circle cx="6.6" cy="10.6" r="3.2" fill="#0c1018" stroke="#fff" stroke-width="1.4"/><path d="M1 20.6 Q1.6 14.6 6.6 14.6 Q11.6 14.6 12.4 20.6" stroke="#fff" stroke-width="1.4" fill="none"/></svg>
<svg class="abs" style="left:1334px;top:869px" width="19" height="11" viewBox="0 0 19 11" ><path d="M1.4 9.8 L9.4 1.6 L17.4 9.8" stroke="#fff" stroke-width="1.4" fill="none"/></svg>
<svg class="abs" style="left:1362px;top:867px" width="23" height="15" viewBox="0 0 23 15" ><rect x="6.4" y="3.4" width="13.6" height="9.4" fill="none" stroke="#fff" stroke-width="1.4"/><rect x="20.6" y="6.2" width="1.6" height="3.8" fill="#fff"/>
<path d="M2.4 1 V4 M5.2 1 V4 M1.4 4 H6.2 V6.6 Q6.2 8.6 3.8 8.6 Q1.4 8.6 1.4 6.6 Z M3.8 8.6 V13.6 H7" stroke="#fff" stroke-width="1.1" fill="#0c1018"/></svg>
<svg class="abs" style="left:1395px;top:866px" width="20" height="19" viewBox="0 0 20 19" ><path d="M2 17 A15 15 0 0 1 17 2" stroke="#fff" stroke-width="1.3" fill="none" opacity="0.95"/><path d="M6.2 17 A10.8 10.8 0 0 1 17 6.2" stroke="#fff" stroke-width="1.3" fill="none"/>
<path d="M10.4 17 A6.6 6.6 0 0 1 17 10.4" stroke="#fff" stroke-width="1.3" fill="none"/><circle cx="15.6" cy="15.8" r="1.6" fill="#fff"/></svg>
<svg class="abs" style="left:1422px;top:867px" width="21" height="17" viewBox="0 0 21 17" ><path d="M1 5.4 H4 L8.4 1.2 V15.4 L4 11.2 H1 Z" fill="none" stroke="#fff" stroke-width="1.3" stroke-linejoin="miter"/>
<path d="M12.4 5.2 L18.8 11.6 M18.8 5.2 L12.4 11.6" stroke="#fff" stroke-width="1.4"/></svg>
<div class="t" style="left:1473.5px;top:857px;font-size:14.6px;color:#fff;letter-spacing:-0.407px;">16:29</div>
<div class="t" style="left:1457px;top:880px;font-size:14.6px;color:#fff;letter-spacing:-0.357px;">16.05.2019</div>
<svg class="abs" style="left:1548px;top:864px" width="23" height="23" viewBox="0 0 23 23" ><path d="M1.4 1.4 H20.6 V16.6 H12.8 L10.4 19.6 L8.2 16.6 H1.4 Z" fill="none" stroke="#fff" stroke-width="1.5" stroke-linejoin="miter"/></svg>
<div class="abs" style="left:1594px;top:850px;width:1px;height:50px;background:#3a3f48"></div>
</body></html>
